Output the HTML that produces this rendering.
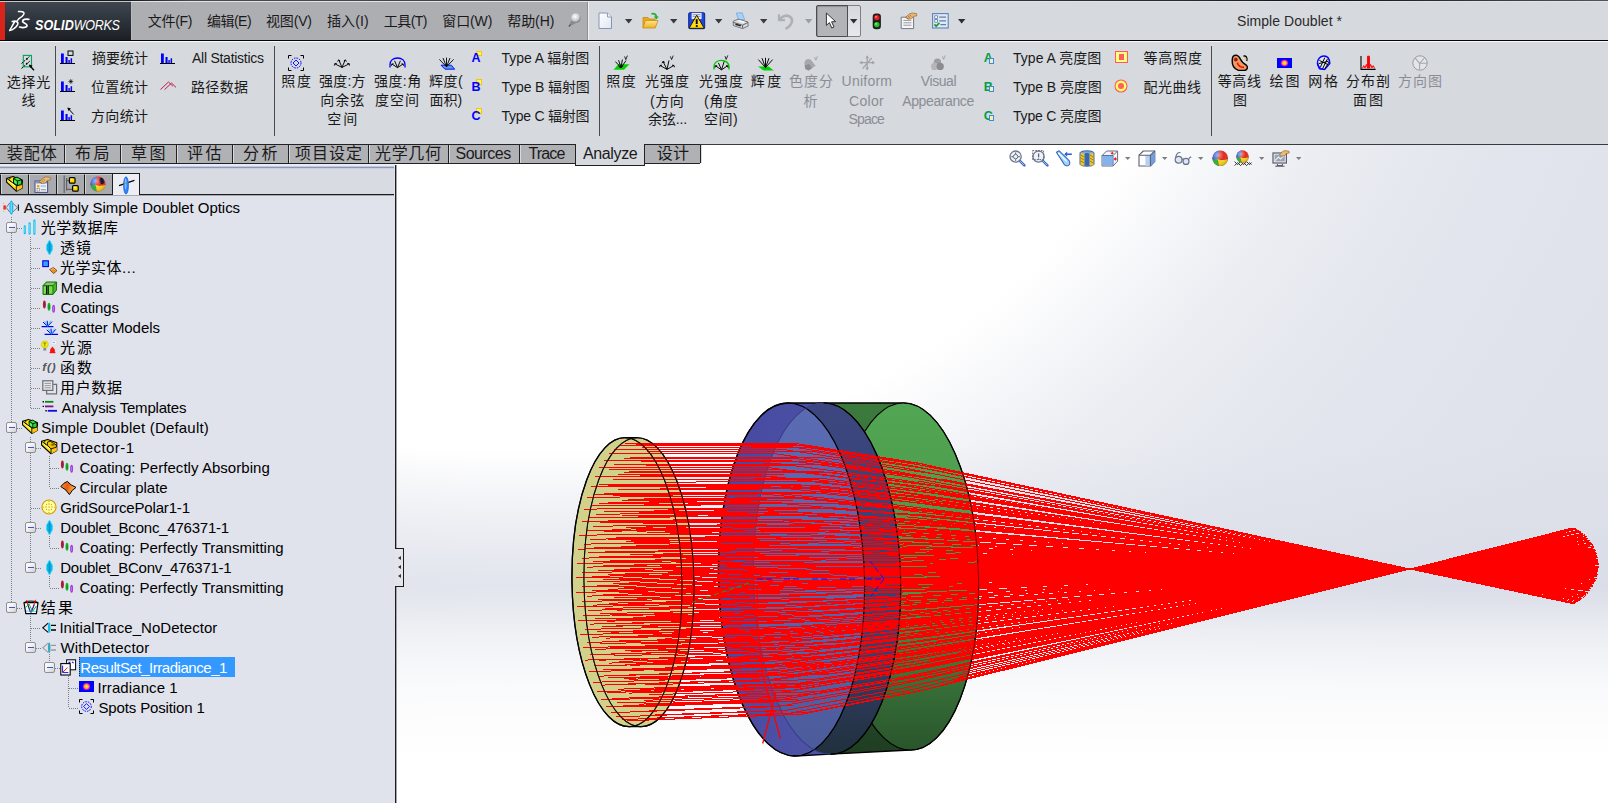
<!DOCTYPE html><html lang="zh"><head><meta charset="utf-8"><title>SOLIDWORKS - Simple Doublet</title><style>
html,body{margin:0;padding:0}
body{width:1608px;height:803px;overflow:hidden;position:relative;background:#fff;font-family:'Liberation Sans','Noto Sans CJK SC',sans-serif;}
.a{position:absolute}
.t{position:absolute;white-space:nowrap;height:24px;line-height:24px}
#logo{left:0;top:2px;width:131px;height:38px;background:linear-gradient(#3f464f 0%,#2f353d 45%,#1c1f25 100%)}
#menu{left:131px;top:2px;width:457px;height:38px;background:#adaeb2}
#qat{left:588px;top:2px;width:1020px;height:38px;background:#d6d9de}
#ribbon{left:0;top:42px;width:1608px;height:102px;background:#d6d9de}
.vs{position:absolute;top:46px;width:1px;height:90px;background:#4a4b50}
#tabs{left:0;top:144px;width:700px;height:20px;background:#b0b1b5;box-sizing:border-box;border-top:1px solid #222;border-bottom:1px solid #222}
.ts{position:absolute;top:145px;width:1px;height:18px;background:#222}
#panel{left:0;top:164px;width:395px;height:639px;background:#e0e3ec}
svg{position:absolute;overflow:visible}
#vp{left:397px;top:145px;width:1211px;height:658px;background:linear-gradient(to bottom,rgba(255,255,255,0) 442px,rgba(255,255,255,.5) 492px,rgba(255,255,255,.82) 540px,#fff 615px),linear-gradient(to bottom,rgba(214,218,229,0) 300px,rgba(214,218,229,.5) 435px,rgba(214,218,229,.5) 465px,rgba(214,218,229,0) 600px),radial-gradient(circle at 140px -408px,rgba(214,218,229,0) 725px,rgba(214,218,229,.2) 790px,rgba(214,218,229,.48) 880px,rgba(214,218,229,.68) 1020px,rgba(214,218,229,.8) 1250px),#fff}
</style></head><body>
<div class="a" id="vp"></div>
<svg class="a" style="left:0;top:0" width="1608" height="803" viewBox="0 0 1608 803">
<defs>
<linearGradient id="gG" x1="0" y1="0" x2="0" y2="1"><stop offset="0" stop-color="#52a653"/><stop offset="0.55" stop-color="#489348"/><stop offset="1" stop-color="#2a552c"/></linearGradient>
<linearGradient id="gGd" x1="0" y1="0" x2="0" y2="1"><stop offset="0" stop-color="#3c7a3c"/><stop offset="0.6" stop-color="#2f5f30"/><stop offset="1" stop-color="#1f3d22"/></linearGradient>
<linearGradient id="gB1" x1="0" y1="0" x2="1" y2="0.25"><stop offset="0" stop-color="#4448a0"/><stop offset="1" stop-color="#5258a8"/></linearGradient>
<linearGradient id="gB2" x1="0" y1="0" x2="0" y2="1"><stop offset="0" stop-color="#5b6bb3"/><stop offset="0.7" stop-color="#5364a8"/><stop offset="1" stop-color="#4a5a9a"/></linearGradient>
<linearGradient id="gB3" x1="0" y1="0" x2="0" y2="1"><stop offset="0" stop-color="#3c4680"/><stop offset="0.7" stop-color="#36406f"/><stop offset="1" stop-color="#20303c"/></linearGradient>
</defs>
<g transform="translate(-8.15,0) skewX(0.8)">
<path d="M627.0,437.7A55.0,144.5 0 0 0 627.0,726.7L639.0,726.7A55.0,144.5 0 0 0 639.0,437.7Z" fill="#d2d18b" stroke="#000" stroke-width="1.3"/>
<path d="M627.0,437.7A55.0,144.5 0 0 1 627.0,726.7" fill="none" stroke="#1a1a10" stroke-width="1"/>
<path d="M639.0,437.7A55.0,144.5 0 0 0 639.0,726.7" fill="none" stroke="#1a1a10" stroke-width="1"/>
</g>
<g transform="translate(-9.6,0) skewX(1.146)">
<clipPath id="cB"><path d="M751.4,578.6A73.6,175.6 0 1 1 898.6,578.6A73.6,175.6 0 1 1 751.4,578.6Z"/></clipPath>
<path d="M825.0,403.0A73.6,175.6 0 0 0 825.0,754.2L905.0,750.0A71.6,173.5 0 0 0 905.0,403.0Z" fill="url(#gGd)" stroke="#000" stroke-width="1.3"/>
<path d="M833.4,576.5A71.6,173.5 0 1 1 976.6,576.5A71.6,173.5 0 1 1 833.4,576.5Z" fill="url(#gG)" stroke="#000" stroke-width="1.2"/>
<path d="M789.5,403.0A73.0,176.5 0 0 0 789.5,756.0L825.0,754.2A73.6,175.6 0 0 0 825.0,403.0Z" fill="url(#gB1)" stroke="#000" stroke-width="1.3"/>
<path d="M751.4,578.6A73.6,175.6 0 1 1 898.6,578.6A73.6,175.6 0 1 1 751.4,578.6Z" fill="url(#gB3)"/>
<path d="M716.5,579.5A73.0,176.5 0 1 1 862.5,579.5A73.0,176.5 0 1 1 716.5,579.5Z" fill="url(#gB2)" clip-path="url(#cB)"/>
<path d="M789.5,403.0A73.0,176.5 0 0 1 789.5,756.0" fill="none" stroke="#000" stroke-width="1.2"/>
<path d="M825.0,403.0A73.6,175.6 0 0 1 825.0,754.2" fill="none" stroke="#000" stroke-width="1.2"/>
<path d="M825.0,403.0A73.6,175.6 0 0 0 825.0,754.2" fill="none" stroke="#3a3f8c" stroke-width="1"/>
<path d="M789.5,403.0A73.0,176.5 0 0 0 789.5,756.0" fill="none" stroke="#000" stroke-width="1.3"/>
</g>
<path d="M629,582.2L772,579.7M940,576.8L1410,569L1595,565.4M634,577.0L777,574.6M944,572.7L1410,569L1593,567.0M630,568.5L798,565.9L916,565.9L1410,569L1595,569.6M625,573.7L768,571.4M936,570.1L1410,569L1596,568.0M624,587.4L792,584.4L910,581.5L1410,569L1596,563.8M628,595.9L796,592.7L914,588.6L1410,569L1595,561.2M633,590.7L776,588.0M944,583.4L1410,569L1593,562.8M639,571.7L807,569.0L924,568.6L1410,569L1591,568.6M635,560.3L779,558.2M946,559.6L1410,569L1592,572.1M630,554.7L799,552.5L916,554.5L1410,569L1594,573.8M625,556.5L768,554.6M936,556.7L1410,569L1596,573.3M621,565.2L763,563.1M933,563.5L1410,569L1597,570.6M619,578.4L786,575.6L905,574.1L1410,569L1598,566.5M619,592.7L787,589.5L906,585.9L1410,569L1598,562.2M623,604.1L765,601.2M934,594.0L1410,569L1596,558.7M628,609.7L771,606.6M939,598.3L1410,569L1595,557.0M633,607.9L801,604.3L919,598.4L1410,569L1593,557.5M637,599.2L806,595.9L923,591.2L1410,569L1591,560.2M639,586.0L808,582.9L925,580.3L1410,569L1591,564.2M644,566.5L812,563.9L929,564.3L1410,569L1588,570.2M641,554.3L809,552.0L926,554.2L1410,569L1589,573.9M636,545.4L780,543.7M947,548.0L1410,569L1591,576.6M631,541.0L799,539.0L917,543.2L1410,569L1592,578.0M626,541.5L769,539.9M937,544.9L1410,569L1594,577.8M621,547.0L763,545.2M933,549.2L1410,569L1596,576.2M617,556.7L759,554.7M929,556.8L1410,569L1597,573.2M614,569.5L756,567.3M927,566.8L1410,569L1598,569.3M613,583.8L780,580.8L900,578.5L1410,569L1599,564.9M614,597.9L757,595.1M927,589.1L1410,569L1598,560.6M617,610.1L785,606.6L904,600.3L1410,569L1597,556.9M622,619.0L789,615.2L908,607.6L1410,569L1596,554.2M627,623.4L795,619.5L913,611.2L1410,569L1594,552.8M632,622.9L801,619.0L918,610.8L1410,569L1592,553.0M637,617.4L781,614.2M947,604.4L1410,569L1590,554.7M641,607.7L785,604.7M951,596.8L1410,569L1589,557.6M644,594.9L788,592.2M953,586.7L1410,569L1588,561.5M645,580.6L814,577.7L930,575.9L1410,569L1588,565.9M649,561.2L818,558.8L933,559.9L1410,569L1585,571.8M646,548.7L790,546.9M955,550.5L1410,569L1586,575.6M642,538.4L811,536.5L927,541.1L1410,569L1587,578.7M637,531.1L806,529.4L923,535.0L1410,569L1589,580.9M632,527.2L775,525.9M943,533.7L1410,569L1591,582.1M626,527.2L794,525.6L913,531.8L1410,569L1592,582.1M621,530.8L789,529.1L908,534.8L1410,569L1594,581.0M616,538.0L759,536.4M929,542.2L1410,569L1596,578.8M612,548.2L779,546.1L899,549.2L1410,569L1597,575.7M610,560.7L777,558.3L897,559.5L1410,569L1598,571.9M608,574.7L775,571.9L896,571.0L1410,569L1599,567.7M608,589.2L775,586.1L895,583.0L1410,569L1599,563.3M609,603.2L752,600.2M923,593.2L1410,569L1598,559.1M612,615.7L779,612.0L899,604.9L1410,569L1597,555.3M616,626.0L759,622.6M929,611.1L1410,569L1596,552.2M621,633.3L788,629.2L907,619.4L1410,569L1594,550.0M626,637.2L794,632.9L912,622.6L1410,569L1593,548.8M632,637.2L775,633.6M942,619.9L1410,569L1591,548.8M637,633.6L805,629.4L922,619.6L1410,569L1589,549.9M642,626.4L785,623.0M951,611.4L1410,569L1587,552.1M646,616.2L815,612.5L931,605.3L1410,569L1586,555.1M648,603.7L817,600.3L933,595.0L1410,569L1585,558.9M650,589.7L819,586.6L934,583.4L1410,569L1584,563.2M650,575.2L819,572.5L935,571.5L1410,569L1584,567.5M653,556.0L797,554.0M962,556.3L1410,569L1581,573.3M651,543.2L820,541.2L935,545.1L1410,569L1582,577.1M647,532.2L816,530.4L932,535.9L1410,569L1583,580.5M643,523.3L812,521.8L928,528.6L1410,569L1585,583.1M638,517.0L806,515.6L923,523.4L1410,569L1587,585.0M633,513.5L801,512.2L918,520.5L1410,569L1588,586.0M627,513.1L795,511.8L913,520.2L1410,569L1590,586.2M622,515.6L789,514.3L908,522.3L1410,569L1592,585.4M617,521.1L784,519.6L903,526.8L1410,569L1594,583.8M612,529.2L754,527.8M925,535.3L1410,569L1595,581.3M608,539.7L775,537.8L896,542.2L1410,569L1597,578.2M605,552.0L772,549.8L893,552.3L1410,569L1598,574.5M603,565.7L770,563.1L891,563.6L1410,569L1598,570.4M603,580.0L769,577.1L890,575.4L1410,569L1599,566.1M603,594.5L745,591.7M917,586.4L1410,569L1598,561.8M605,608.4L771,604.8L892,598.8L1410,569L1598,557.6M607,621.2L774,617.3L895,609.4L1410,569L1597,553.8M611,632.2L753,628.7M924,616.0L1410,569L1596,550.5M615,641.1L782,636.8L902,625.8L1410,569L1594,547.8M620,647.4L763,643.6M932,627.9L1410,569L1593,545.9M625,650.9L768,647.0M937,630.6L1410,569L1591,544.9M631,651.3L774,647.5M942,631.0L1410,569L1589,544.8M636,648.8L805,644.3L922,632.2L1410,569L1587,545.5M641,643.3L785,639.6M951,624.7L1410,569L1585,547.2M646,635.2L790,631.6M955,618.3L1410,569L1584,549.6M650,624.7L819,620.8L934,612.3L1410,569L1583,552.7M653,612.4L822,608.7L937,602.1L1410,569L1582,556.4M655,598.7L799,595.9M963,589.7L1410,569L1581,560.5M655,584.4L825,581.4L940,579.0L1410,569L1581,564.8M655,569.9L824,567.3L939,567.1L1410,569L1581,569.1M658,550.8L828,548.6L942,551.3L1410,569L1577,574.8M656,537.9L825,536.0L940,540.6L1410,569L1578,578.6M652,526.3L822,524.7L937,531.1L1410,569L1579,582.0M648,516.5L792,515.3M957,525.3L1410,569L1581,584.9M644,508.6L813,507.4L929,516.5L1410,569L1582,587.3M639,503.0L782,502.1M949,514.7L1410,569L1584,588.9M633,499.8L802,498.8L919,509.2L1410,569L1586,589.9M628,499.1L796,498.1L914,508.6L1410,569L1588,590.1M622,500.9L765,500.0M934,513.1L1410,569L1589,589.5M617,505.2L760,504.2M929,516.4L1410,569L1591,588.3M612,511.8L754,510.7M925,521.6L1410,569L1593,586.3M608,520.6L750,519.3M921,528.5L1410,569L1594,583.7M604,531.2L771,529.5L892,535.1L1410,569L1596,580.6M601,543.4L768,541.4L889,545.2L1410,569L1597,577.0M599,556.8L741,554.8M913,556.9L1410,569L1597,573.0M598,570.9L739,568.6M912,567.9L1410,569L1598,568.8M597,585.4L764,582.4L886,579.9L1410,569L1598,564.6M598,599.8L765,596.4L886,591.7L1410,569L1598,560.3M600,613.6L766,610.0L888,603.2L1410,569L1597,556.2M602,626.5L769,622.6L890,613.8L1410,569L1596,552.4M606,638.1L772,633.8L893,623.3L1410,569L1595,549.0M610,647.9L777,643.4L897,631.5L1410,569L1594,546.1M614,655.8L781,651.1L901,637.9L1410,569L1592,543.8M619,661.4L787,656.6L906,642.6L1410,569L1590,542.1M625,664.6L768,660.5M936,641.4L1410,569L1589,541.2M630,665.3L798,660.4L916,645.8L1410,569L1587,540.9M636,663.5L804,658.7L921,644.3L1410,569L1585,541.5M641,659.2L810,654.5L926,640.8L1410,569L1583,542.8M646,652.6L815,648.0L931,635.3L1410,569L1582,544.7M650,643.8L819,639.4L935,628.1L1410,569L1580,547.3M654,633.2L823,629.1L938,619.3L1410,569L1579,550.4M657,621.0L801,617.7M965,607.2L1410,569L1578,554.0M659,607.6L829,604.1L943,598.2L1410,569L1577,558.0M660,593.5L805,590.8M968,585.6L1410,569L1577,562.2M661,579.0L805,576.6M968,574.3L1410,569L1577,566.5M660,564.6L804,562.5M967,563.0L1410,569L1577,570.7M663,545.5L808,543.8M970,548.1L1410,569L1573,576.2M661,532.5L805,531.1M968,537.9L1410,569L1574,580.0M658,520.7L802,519.4M965,528.6L1410,569L1575,583.5M654,510.2L798,509.1M962,520.3L1410,569L1576,586.5M649,501.3L793,500.4M958,513.4L1410,569L1578,589.1M645,494.2L788,493.5M954,507.8L1410,569L1579,591.2M639,489.1L808,488.4L925,500.4L1410,569L1581,592.6M634,486.0L777,485.5M944,501.4L1410,569L1583,593.5M629,485.1L796,484.5L915,497.1L1410,569L1585,593.8M623,486.4L791,485.8L909,498.2L1410,569L1586,593.4M618,489.8L760,489.2M930,504.4L1410,569L1588,592.4M613,495.3L755,494.6M925,508.7L1410,569L1590,590.8M608,502.7L750,501.9M921,514.5L1410,569L1591,588.7M604,511.9L770,510.7L891,519.2L1410,569L1593,586.0M600,522.7L742,521.4M914,530.2L1410,569L1594,582.9M597,534.8L763,533.0L885,538.1L1410,569L1595,579.3M594,548.0L761,545.8L883,549.0L1410,569L1596,575.5M593,561.9L759,559.4L881,560.5L1410,569L1596,571.5M592,576.3L758,573.5L881,572.3L1410,569L1597,567.3M592,590.8L734,588.1M907,583.5L1410,569L1597,563.1M593,605.1L735,602.1M908,594.7L1410,569L1596,558.9M595,618.9L736,615.6M910,605.5L1410,569L1596,554.9M597,631.9L739,628.4M912,615.7L1410,569L1595,551.1M600,643.7L767,639.3L888,628.0L1410,569L1594,547.7M604,654.2L746,650.3M918,633.2L1410,569L1593,544.6M609,663.1L751,659.0M922,640.2L1410,569L1591,542.0M613,670.2L781,665.2L900,649.8L1410,569L1590,540.0M619,675.3L786,670.2L905,654.1L1410,569L1588,538.5M624,678.4L767,673.9M936,652.1L1410,569L1586,537.6M629,679.3L798,674.0L915,657.3L1410,569L1584,537.3M635,678.0L778,673.5M945,651.8L1410,569L1582,537.7M640,674.6L809,669.4L926,653.4L1410,569L1581,538.7M645,669.1L814,664.1L930,648.9L1410,569L1579,540.3M650,661.7L819,656.8L935,642.8L1410,569L1577,542.5M654,652.5L824,647.9L939,635.2L1410,569L1576,545.1M658,641.7L802,638.0M966,623.4L1410,569L1575,548.3M661,629.6L831,625.5L945,616.3L1410,569L1574,551.8M664,616.4L808,613.3M971,603.6L1410,569L1573,555.6M665,602.5L835,599.1L949,594.0L1410,569L1573,559.7M666,588.1L836,585.1L949,582.1L1410,569L1572,563.8M666,573.6L836,570.9L949,570.2L1410,569L1572,568.1M665,559.3L809,557.3M972,558.9L1410,569L1573,572.2M668,540.3L813,538.6M975,543.9L1410,569L1569,577.6M666,527.2L835,525.6L949,531.9L1410,569L1569,581.3M663,515.1L832,513.8L946,521.9L1410,569L1570,584.8M659,504.2L828,503.1L943,512.8L1410,569L1572,587.9M655,494.5L824,493.7L939,504.9L1410,569L1573,590.6M650,486.4L819,485.8L935,498.2L1410,569L1574,593.0M645,479.9L814,479.4L930,492.8L1410,569L1576,594.8M640,475.2L784,474.9M950,493.0L1410,569L1578,596.2M635,472.3L803,472.0L920,486.5L1410,569L1579,597.0M629,471.3L772,471.0M940,489.9L1410,569L1581,597.3M624,472.1L766,471.9M935,490.6L1410,569L1583,597.0M618,474.9L761,474.6M931,492.7L1410,569L1585,596.2M613,479.5L755,479.1M926,496.3L1410,569L1586,594.9M608,485.8L750,485.3M921,501.3L1410,569L1588,593.1M604,493.8L770,493.0L891,504.3L1410,569L1589,590.8M599,503.4L766,502.3L887,512.2L1410,569L1591,588.1M596,514.2L762,512.9L884,521.1L1410,569L1592,585.0M593,526.2L759,524.6L881,531.0L1410,569L1593,581.6M590,539.2L756,537.3L879,541.7L1410,569L1594,577.9M588,552.9L754,550.7L877,553.1L1410,569L1594,574.0M587,567.1L753,564.6L876,564.8L1410,569L1595,569.9M587,581.6L728,579.1M903,576.3L1410,569L1595,565.8M587,596.1L728,593.3M903,587.7L1410,569L1595,561.6M588,610.3L729,607.3M904,598.8L1410,569L1594,557.6M590,624.1L731,620.8M905,609.6L1410,569L1594,553.7M592,637.2L759,632.9L881,622.6L1410,569L1593,549.9M595,649.3L762,644.7L884,632.6L1410,569L1592,546.5M599,660.2L766,655.4L887,641.6L1410,569L1591,543.3M603,669.9L770,664.8L891,649.5L1410,569L1590,540.6M608,678.0L775,672.8L895,656.3L1410,569L1588,538.3M613,684.5L780,679.1L900,661.6L1410,569L1587,536.4M618,689.2L760,684.5M930,660.6L1410,569L1585,535.1M623,692.1L791,686.6L910,667.9L1410,569L1583,534.2M629,693.1L797,687.6L915,668.8L1410,569L1581,534.0M634,692.3L803,686.7L920,668.0L1410,569L1580,534.2M640,689.5L808,684.0L925,665.8L1410,569L1578,535.0M645,684.9L814,679.5L930,662.0L1410,569L1576,536.3M650,678.6L794,674.1M959,652.3L1410,569L1574,538.1M654,670.6L824,665.5L939,650.1L1410,569L1573,540.4M659,661.0L803,657.0M966,638.6L1410,569L1572,543.1M662,650.2L832,645.6L946,633.3L1410,569L1570,546.2M665,638.2L835,633.9L949,623.4L1410,569L1569,549.6M668,625.2L838,621.2L951,612.7L1410,569L1569,553.3M670,611.5L840,607.8L953,601.4L1410,569L1568,557.3M671,597.3L841,594.0L954,589.6L1410,569L1568,561.3M671,582.8L841,579.8L954,577.7L1410,569L1568,565.5M671,568.3L816,566.1M977,565.9L1410,569L1568,569.6M670,554.1L815,552.1M976,554.7L1410,569L1568,573.7M673,535.0L818,533.5M979,539.8L1410,569L1564,578.9M671,522.0L841,520.5L954,527.5L1410,569L1564,582.5M668,509.7L838,508.5L951,517.4L1410,569L1565,585.9M664,498.4L809,497.6M971,511.1L1410,569L1566,589.1M660,488.2L830,487.5L944,499.7L1410,569L1568,591.9M656,479.3L825,478.8L940,492.3L1410,569L1569,594.4M651,471.8L820,471.5L936,486.1L1410,569L1571,596.5M646,465.8L790,465.7M955,485.6L1410,569L1572,598.2M641,461.4L809,461.3L926,477.5L1410,569L1574,599.4M635,458.6L779,458.6M946,479.9L1410,569L1576,600.2M630,457.4L773,457.5M941,479.0L1410,569L1577,600.5M624,458.0L792,458.0L911,474.7L1410,569L1579,600.4M619,460.2L786,460.2L906,476.6L1410,569L1581,599.8M614,464.1L781,464.0L901,479.8L1410,569L1582,598.7M609,469.6L776,469.3L896,484.3L1410,569L1584,597.1M604,476.6L770,476.2L891,490.1L1410,569L1586,595.2M599,485.0L766,484.4L887,497.0L1410,569L1587,592.8M595,494.8L761,493.9L883,505.1L1410,569L1588,590.1M592,505.7L733,504.8M907,516.9L1410,569L1589,587.0M588,517.7L730,516.5M904,526.2L1410,569L1590,583.7M586,530.5L727,529.1M902,536.3L1410,569L1591,580.1M584,544.1L725,542.3M900,546.9L1410,569L1592,576.3M582,558.1L748,555.8L872,557.3L1410,569L1592,572.4M582,572.5L723,570.2M898,569.2L1410,569L1593,568.4M582,587.0L747,584.0L871,581.2L1410,569L1593,564.3M582,601.4L723,598.6M898,591.9L1410,569L1592,560.3M583,615.6L749,611.9L872,604.8L1410,569L1592,556.3M585,629.4L726,625.9M901,613.7L1410,569L1591,552.5M587,642.4L753,638.1L876,626.9L1410,569L1591,548.9M590,654.7L756,650.1L879,637.1L1410,569L1590,545.4M594,666.0L760,661.1L882,646.4L1410,569L1589,542.3M598,676.2L764,671.0L886,654.8L1410,569L1587,539.4M602,685.1L769,679.7L890,662.1L1410,569L1586,536.9M607,692.6L774,687.0L894,668.3L1410,569L1585,534.8M612,698.6L779,692.9L899,673.3L1410,569L1583,533.2M617,703.0L785,697.2L904,676.9L1410,569L1581,531.9M623,705.8L765,700.8M934,673.7L1410,569L1580,531.1M628,707.0L796,701.1L914,680.2L1410,569L1578,530.8M634,706.4L777,701.4M944,674.1L1410,569L1576,531.0M639,704.2L782,699.2M949,672.4L1410,569L1574,531.6M644,700.3L813,694.6L929,674.7L1410,569L1573,532.7M649,694.8L793,690.0M958,665.0L1410,569L1571,534.2M654,687.8L824,682.4L939,664.4L1410,569L1570,536.2M659,679.4L828,674.1L943,657.4L1410,569L1568,538.5M663,669.6L833,664.6L947,649.4L1410,569L1567,541.3M666,658.7L811,654.6M973,636.7L1410,569L1566,544.3M670,646.7L840,642.3L953,630.5L1410,569L1565,547.7M672,633.9L842,629.7L955,619.9L1410,569L1564,551.2M674,620.3L844,616.5L957,608.7L1410,569L1563,555.0M676,606.3L821,603.3M981,595.7L1410,569L1563,558.9M676,591.9L847,588.8L959,585.2L1410,569L1563,563.0M676,577.4L821,575.0M982,573.0L1410,569L1563,567.0M676,563.0L821,560.9M982,561.7L1410,569L1563,571.1M675,548.8L845,546.6L958,549.6L1410,569L1563,575.0M678,529.8L848,528.1L961,534.0L1410,569L1558,580.0M675,516.7L846,515.3L958,523.2L1410,569L1559,583.6M673,504.3L843,503.2L956,512.9L1410,569L1560,587.0M669,492.7L839,491.9L953,503.4L1410,569L1561,590.1M665,482.1L835,481.6L949,494.6L1410,569L1562,593.0M661,472.6L831,472.3L945,486.8L1410,569L1564,595.6M657,464.4L826,464.2L941,480.0L1410,569L1565,597.9M652,457.4L821,457.4L936,474.2L1410,569L1566,599.8M647,451.7L816,451.9L932,469.6L1410,569L1568,601.3M642,447.5L810,447.8L927,466.1L1410,569L1570,602.5M636,444.8L805,445.2L922,463.9L1410,569L1571,603.2M631,443.6L799,444.0L917,462.9L1410,569L1573,603.5M625,443.9L793,444.3L911,463.1L1410,569L1575,603.4M620,445.7L787,446.1L906,464.6L1410,569L1576,602.9M614,449.0L782,449.3L901,467.3L1410,569L1578,602.0M609,453.8L776,453.9L896,471.3L1410,569L1580,600.7M604,460.0L746,460.0M918,481.0L1410,569L1581,599.1M599,467.5L766,467.3L887,482.6L1410,569L1583,597.0M595,476.3L761,475.9L883,489.8L1410,569L1584,594.6M591,486.2L757,485.6L880,498.0L1410,569L1585,591.9M587,497.2L729,496.4M903,510.2L1410,569L1586,588.9M584,509.1L725,508.1M900,519.5L1410,569L1587,585.7M582,521.8L747,520.4L871,527.4L1410,569L1588,582.2M579,535.2L720,533.7M896,540.0L1410,569L1589,578.6M578,549.1L719,547.3M895,550.9L1410,569L1589,574.8M577,563.4L718,561.3M894,562.0L1410,569L1590,570.9M576,577.8L742,575.0L866,573.6L1410,569L1590,566.9M576,592.4L742,589.2L866,585.6L1410,569L1590,563.0M577,606.8L742,603.2L867,597.5L1410,569L1589,559.1M578,620.9L719,617.6M895,607.1L1410,569L1589,555.2M580,634.6L746,630.4L869,620.5L1410,569L1589,551.5M583,647.7L748,643.2L872,631.3L1410,569L1588,547.9M585,660.1L727,656.1M901,637.8L1410,569L1587,544.5M589,671.7L755,666.6L877,651.1L1410,569L1586,541.4M593,682.3L759,677.0L881,659.8L1410,569L1585,538.5M597,691.8L738,687.1M911,662.6L1410,569L1583,535.9M601,700.0L768,694.3L889,674.5L1410,569L1582,533.6M606,707.0L773,701.1L894,680.2L1410,569L1581,531.7M611,712.7L778,706.6L898,684.9L1410,569L1579,530.2M616,716.9L784,710.7L903,688.3L1410,569L1577,529.1M622,719.6L789,713.4L908,690.6L1410,569L1576,528.3M627,720.8L770,715.5M939,685.4L1410,569L1574,528.0M633,720.5L801,714.3L919,691.3L1410,569L1572,528.1M638,718.7L807,712.5L924,689.8L1410,569L1571,528.6M644,715.4L787,710.2M953,681.1L1410,569L1569,529.5M649,710.6L793,705.5M958,677.4L1410,569L1567,530.8M654,704.4L798,699.4M962,672.5L1410,569L1566,532.4M659,696.9L828,691.2L943,671.9L1410,569L1564,534.5M663,688.1L808,683.5M970,659.8L1410,569L1563,536.9M667,678.2L837,673.0L950,656.4L1410,569L1562,539.6M671,667.2L841,662.2L954,647.3L1410,569L1561,542.6M674,655.3L819,651.3M980,634.0L1410,569L1560,545.8M676,642.6L822,638.8M982,624.1L1410,569L1559,549.3M679,629.2L849,625.1L961,616.0L1410,569L1558,553.0M680,615.3L851,611.6L963,604.5L1410,569L1558,556.7M681,601.0L826,598.1M986,591.5L1410,569L1557,560.6M682,586.6L852,583.5L964,580.8L1410,569L1557,564.6M682,572.0L852,569.4L964,568.8L1410,569L1557,568.5M681,557.6L852,555.3L963,557.0L1410,569L1558,572.4M680,543.5L825,541.8M985,546.5L1410,569L1558,576.3" fill="none" stroke="#ff0000" stroke-width="1" shape-rendering="crispEdges"/>
<g transform="translate(-9.6,0) skewX(1.146)">
<path d="M789.5,403.0A73.0,176.5 0 0 1 789.5,756.0" fill="none" stroke="#000" stroke-width="1" opacity="0.45"/>
<path d="M825.0,403.0A73.6,175.6 0 0 1 825.0,754.2" fill="none" stroke="#000" stroke-width="1" opacity="0.45"/>
<path d="M905.0,403.0A71.6,173.5 0 0 1 905.0,750.0" fill="none" stroke="#000" stroke-width="1" opacity="0.5"/>
</g>
<g transform="translate(-8.15,0) skewX(0.8)">
<path d="M627.0,437.7A55.0,144.5 0 0 1 627.0,726.7" fill="none" stroke="#000" stroke-width="1" opacity="0.8"/>
<path d="M639.0,437.7A55.0,144.5 0 0 1 639.0,726.7" fill="none" stroke="#000" stroke-width="1" opacity="0.8"/>
<path d="M639.0,437.7A55.0,144.5 0 0 0 639.0,726.7" fill="none" stroke="#000" stroke-width="1" opacity="0.75"/>
<path d="M627.0,437.7A55.0,144.5 0 0 0 627.0,726.7" fill="none" stroke="#000" stroke-width="1.2" opacity="0.9"/>
</g>
<path d="M757,579H772M784,579H800M812,579H828M840,579H856M866,579H884M884,579L870,561M884,579L871,596" stroke="#1010ff" stroke-width="1" fill="none" stroke-dasharray="6 3"/>
<path d="M749,583L693,602" stroke="#18a018" stroke-width="1" fill="none" stroke-dasharray="5 3"/>
<path d="M762.7,743.5L775.7,693.5M757,585C757,640 762,676 768.6,696L780.4,738.5" stroke="#ff0000" stroke-width="1.3" fill="none"/>
</svg>
<div class="a" id="logo"></div><div class="a" style="left:0;top:2px;width:5px;height:38px;background:#d8241b"></div>
<div class="a" id="menu"></div><div class="a" id="qat"></div>
<div class="a" style="left:131px;top:2px;width:1px;height:38px;background:#b9babe"></div>
<div class="a" style="left:587px;top:2px;width:1px;height:38px;background:#8e8f94"></div>
<div class="a" style="left:588px;top:2px;width:1px;height:38px;background:#f2f3f6"></div>
<div class="a" style="left:0;top:0;width:1608px;height:1px;background:linear-gradient(to right,#0c0c0c 0,#1a1a1a 8%,#4a4a4a 12%,#3a3a3a 50%,#2a2a2a 74%,#111 82%,#555 100%)"></div>
<div class="a" style="left:0;top:1px;width:1608px;height:1px;background:#e1e4e9"></div>
<div class="a" style="left:0;top:1px;width:131px;height:1px;background:#c3c6ca"></div>
<div class="a" style="left:0;top:40px;width:1608px;height:1px;background:#050505"></div>
<div class="a" style="left:0;top:41px;width:1608px;height:1px;background:#f7f8fa"></div>
<div class="a" id="ribbon"></div>
<div class="vs" style="left:55px"></div>
<div class="vs" style="left:274px"></div>
<div class="vs" style="left:599px"></div>
<div class="vs" style="left:1211px"></div>
<div class="a" style="left:700px;top:144px;width:908px;height:1px;background:#3a3a3d"></div>
<div class="a" id="tabs"></div>
<div class="ts" style="left:64px"></div><div class="ts" style="left:65px;background:#d9dade"></div>
<div class="ts" style="left:120px"></div><div class="ts" style="left:121px;background:#d9dade"></div>
<div class="ts" style="left:176px"></div><div class="ts" style="left:177px;background:#d9dade"></div>
<div class="ts" style="left:232px"></div><div class="ts" style="left:233px;background:#d9dade"></div>
<div class="ts" style="left:288px"></div><div class="ts" style="left:289px;background:#d9dade"></div>
<div class="ts" style="left:368px"></div><div class="ts" style="left:369px;background:#d9dade"></div>
<div class="ts" style="left:448px"></div><div class="ts" style="left:449px;background:#d9dade"></div>
<div class="ts" style="left:519px"></div><div class="ts" style="left:520px;background:#d9dade"></div>
<div class="ts" style="left:700px"></div><div class="ts" style="left:701px;background:#d9dade"></div>
<div class="a" style="left:575px;top:144px;width:70px;height:22px;box-sizing:border-box;background:#d6d9de;border:1px solid #222;border-top:none"></div>
<div class="a" id="panel"></div>
<div class="a" style="left:0;top:164px;width:395px;height:3px;background:#e8ebf3"></div>
<div class="a" style="left:0;top:166px;width:394px;height:3px;background:linear-gradient(#c3c8dc 0 1px,#8d97b8 1px 2px,#c9cee0 2px 3px)"></div>
<div class="a" style="left:0;top:169px;width:394px;height:25px;background:#d8dbe1"></div>
<div class="a" style="left:0;top:194px;width:394px;height:1px;background:#1c1c1e"></div><div class="a" style="left:0;top:195px;width:394px;height:1px;background:#a9abb3"></div>
<div class="a" style="left:395px;top:165px;width:1px;height:638px;background:#1c1c1e"></div>
<div class="a" style="left:396px;top:165px;width:1px;height:638px;background:#a4a5ab"></div>
<div class="a" style="left:1px;top:174px;width:26px;height:20px;background:#a9abb0;border:1px solid #77797f;border-bottom:none;box-sizing:border-box"></div>
<div class="a" style="left:29px;top:174px;width:26px;height:20px;background:#a9abb0;border:1px solid #77797f;border-bottom:none;box-sizing:border-box"></div>
<div class="a" style="left:57px;top:174px;width:26px;height:20px;background:#a9abb0;border:1px solid #77797f;border-bottom:none;box-sizing:border-box"></div>
<div class="a" style="left:85px;top:174px;width:26px;height:20px;background:#a9abb0;border:1px solid #77797f;border-bottom:none;box-sizing:border-box"></div>
<div class="a" style="left:113px;top:173px;width:27px;height:22px;background:#e6e8ee;border:1px solid #f8f8fa;border-bottom:none;box-sizing:border-box"></div>
<div class="a" style="left:395px;top:548px;width:9px;height:39px;box-sizing:border-box;background:#e4e5ea;border:1px solid #1c1c1e;border-left:none"></div>
<div class="a" style="left:398px;top:555.5px;width:0;height:0;border-top:2.5px solid transparent;border-bottom:2.5px solid transparent;border-right:3px solid #333"></div>
<div class="a" style="left:398px;top:564.5px;width:0;height:0;border-top:2.5px solid transparent;border-bottom:2.5px solid transparent;border-right:3px solid #333"></div>
<div class="a" style="left:398px;top:573.5px;width:0;height:0;border-top:2.5px solid transparent;border-bottom:2.5px solid transparent;border-right:3px solid #333"></div>
<div class="a" style="left:79px;top:657px;width:156px;height:20px;background:#3399ff"></div>
<div class="a" style="left:11px;top:217px;width:1px;height:385px;background:repeating-linear-gradient(to bottom,#7d7e84 0 1px,transparent 1px 2px)"></div>
<div class="a" style="left:30px;top:237px;width:1px;height:171px;background:repeating-linear-gradient(to bottom,#7d7e84 0 1px,transparent 1px 2px)"></div>
<div class="a" style="left:30px;top:437px;width:1px;height:125px;background:repeating-linear-gradient(to bottom,#7d7e84 0 1px,transparent 1px 2px)"></div>
<div class="a" style="left:30px;top:616px;width:1px;height:26px;background:repeating-linear-gradient(to bottom,#7d7e84 0 1px,transparent 1px 2px)"></div>
<div class="a" style="left:49px;top:456px;width:1px;height:32px;background:repeating-linear-gradient(to bottom,#7d7e84 0 1px,transparent 1px 2px)"></div>
<div class="a" style="left:49px;top:536px;width:1px;height:12px;background:repeating-linear-gradient(to bottom,#7d7e84 0 1px,transparent 1px 2px)"></div>
<div class="a" style="left:49px;top:576px;width:1px;height:12px;background:repeating-linear-gradient(to bottom,#7d7e84 0 1px,transparent 1px 2px)"></div>
<div class="a" style="left:49px;top:654px;width:1px;height:8px;background:repeating-linear-gradient(to bottom,#7d7e84 0 1px,transparent 1px 2px)"></div>
<div class="a" style="left:68px;top:676px;width:1px;height:32px;background:repeating-linear-gradient(to bottom,#7d7e84 0 1px,transparent 1px 2px)"></div>
<div class="a" style="left:17px;top:228px;width:5px;height:1px;background:repeating-linear-gradient(to right,#7d7e84 0 1px,transparent 1px 2px)"></div>
<div class="a" style="left:17px;top:428px;width:5px;height:1px;background:repeating-linear-gradient(to right,#7d7e84 0 1px,transparent 1px 2px)"></div>
<div class="a" style="left:17px;top:608px;width:5px;height:1px;background:repeating-linear-gradient(to right,#7d7e84 0 1px,transparent 1px 2px)"></div>
<div class="a" style="left:31px;top:248px;width:10px;height:1px;background:repeating-linear-gradient(to right,#7d7e84 0 1px,transparent 1px 2px)"></div>
<div class="a" style="left:31px;top:268px;width:10px;height:1px;background:repeating-linear-gradient(to right,#7d7e84 0 1px,transparent 1px 2px)"></div>
<div class="a" style="left:31px;top:288px;width:10px;height:1px;background:repeating-linear-gradient(to right,#7d7e84 0 1px,transparent 1px 2px)"></div>
<div class="a" style="left:31px;top:308px;width:10px;height:1px;background:repeating-linear-gradient(to right,#7d7e84 0 1px,transparent 1px 2px)"></div>
<div class="a" style="left:31px;top:328px;width:10px;height:1px;background:repeating-linear-gradient(to right,#7d7e84 0 1px,transparent 1px 2px)"></div>
<div class="a" style="left:31px;top:348px;width:10px;height:1px;background:repeating-linear-gradient(to right,#7d7e84 0 1px,transparent 1px 2px)"></div>
<div class="a" style="left:31px;top:368px;width:10px;height:1px;background:repeating-linear-gradient(to right,#7d7e84 0 1px,transparent 1px 2px)"></div>
<div class="a" style="left:31px;top:388px;width:10px;height:1px;background:repeating-linear-gradient(to right,#7d7e84 0 1px,transparent 1px 2px)"></div>
<div class="a" style="left:31px;top:408px;width:10px;height:1px;background:repeating-linear-gradient(to right,#7d7e84 0 1px,transparent 1px 2px)"></div>
<div class="a" style="left:36px;top:448px;width:5px;height:1px;background:repeating-linear-gradient(to right,#7d7e84 0 1px,transparent 1px 2px)"></div>
<div class="a" style="left:36px;top:528px;width:5px;height:1px;background:repeating-linear-gradient(to right,#7d7e84 0 1px,transparent 1px 2px)"></div>
<div class="a" style="left:36px;top:568px;width:5px;height:1px;background:repeating-linear-gradient(to right,#7d7e84 0 1px,transparent 1px 2px)"></div>
<div class="a" style="left:36px;top:648px;width:5px;height:1px;background:repeating-linear-gradient(to right,#7d7e84 0 1px,transparent 1px 2px)"></div>
<div class="a" style="left:31px;top:508px;width:10px;height:1px;background:repeating-linear-gradient(to right,#7d7e84 0 1px,transparent 1px 2px)"></div>
<div class="a" style="left:31px;top:628px;width:10px;height:1px;background:repeating-linear-gradient(to right,#7d7e84 0 1px,transparent 1px 2px)"></div>
<div class="a" style="left:50px;top:468px;width:10px;height:1px;background:repeating-linear-gradient(to right,#7d7e84 0 1px,transparent 1px 2px)"></div>
<div class="a" style="left:50px;top:488px;width:10px;height:1px;background:repeating-linear-gradient(to right,#7d7e84 0 1px,transparent 1px 2px)"></div>
<div class="a" style="left:50px;top:548px;width:10px;height:1px;background:repeating-linear-gradient(to right,#7d7e84 0 1px,transparent 1px 2px)"></div>
<div class="a" style="left:50px;top:588px;width:10px;height:1px;background:repeating-linear-gradient(to right,#7d7e84 0 1px,transparent 1px 2px)"></div>
<div class="a" style="left:55px;top:668px;width:5px;height:1px;background:repeating-linear-gradient(to right,#7d7e84 0 1px,transparent 1px 2px)"></div>
<div class="a" style="left:69px;top:688px;width:10px;height:1px;background:repeating-linear-gradient(to right,#7d7e84 0 1px,transparent 1px 2px)"></div>
<div class="a" style="left:69px;top:708px;width:10px;height:1px;background:repeating-linear-gradient(to right,#7d7e84 0 1px,transparent 1px 2px)"></div>
<div class="a" style="left:6px;top:222px;width:11px;height:11px;box-sizing:border-box;border:1px solid #8e8f94;border-radius:2px;background:linear-gradient(135deg,#fff 0%,#f2f2f4 45%,#cfd0d4 100%)"></div><div class="a" style="left:8.5px;top:227px;width:6px;height:1px;background:#3d55c4"></div>
<div class="a" style="left:6px;top:422px;width:11px;height:11px;box-sizing:border-box;border:1px solid #8e8f94;border-radius:2px;background:linear-gradient(135deg,#fff 0%,#f2f2f4 45%,#cfd0d4 100%)"></div><div class="a" style="left:8.5px;top:427px;width:6px;height:1px;background:#3d55c4"></div>
<div class="a" style="left:6px;top:602px;width:11px;height:11px;box-sizing:border-box;border:1px solid #8e8f94;border-radius:2px;background:linear-gradient(135deg,#fff 0%,#f2f2f4 45%,#cfd0d4 100%)"></div><div class="a" style="left:8.5px;top:607px;width:6px;height:1px;background:#3d55c4"></div>
<div class="a" style="left:25px;top:442px;width:11px;height:11px;box-sizing:border-box;border:1px solid #8e8f94;border-radius:2px;background:linear-gradient(135deg,#fff 0%,#f2f2f4 45%,#cfd0d4 100%)"></div><div class="a" style="left:27.5px;top:447px;width:6px;height:1px;background:#3d55c4"></div>
<div class="a" style="left:25px;top:522px;width:11px;height:11px;box-sizing:border-box;border:1px solid #8e8f94;border-radius:2px;background:linear-gradient(135deg,#fff 0%,#f2f2f4 45%,#cfd0d4 100%)"></div><div class="a" style="left:27.5px;top:527px;width:6px;height:1px;background:#3d55c4"></div>
<div class="a" style="left:25px;top:562px;width:11px;height:11px;box-sizing:border-box;border:1px solid #8e8f94;border-radius:2px;background:linear-gradient(135deg,#fff 0%,#f2f2f4 45%,#cfd0d4 100%)"></div><div class="a" style="left:27.5px;top:567px;width:6px;height:1px;background:#3d55c4"></div>
<div class="a" style="left:25px;top:642px;width:11px;height:11px;box-sizing:border-box;border:1px solid #8e8f94;border-radius:2px;background:linear-gradient(135deg,#fff 0%,#f2f2f4 45%,#cfd0d4 100%)"></div><div class="a" style="left:27.5px;top:647px;width:6px;height:1px;background:#3d55c4"></div>
<div class="a" style="left:44px;top:662px;width:11px;height:11px;box-sizing:border-box;border:1px solid #8e8f94;border-radius:2px;background:linear-gradient(135deg,#fff 0%,#f2f2f4 45%,#cfd0d4 100%)"></div><div class="a" style="left:46.5px;top:667px;width:6px;height:1px;background:#3d55c4"></div>
<div class="a" style="left:79px;top:657px;width:1px;height:20px;background:repeating-linear-gradient(to bottom,#222 0 1px,transparent 1px 2px)"></div>
<svg style="left:3px;top:199px" width="17" height="17" viewBox="0 0 17 17" ><path d="M1.6,6.4V10.6" stroke="#ff2020" stroke-width="2.4"/><path d="M0.4,4.2L1.2,5M0.4,12.8L1.2,12" stroke="#f0a000" stroke-width="0.8"/><path d="M7,3.6L3.2,8.6L7,13.4M9.8,4.2L14.4,8.6L9.8,13" fill="none" stroke="#66676e" stroke-width="0.9"/><path d="M15.4,5.6V11.8" stroke="#222" stroke-width="1.2"/><ellipse cx="8.4" cy="8.6" rx="1.6" ry="6.8" fill="#18c8ff" stroke="#00a0e8" stroke-width="0.6"/><path d="M8.2,3.4V13.6" stroke="#b8f0ff" stroke-width="0.7"/></svg>
<svg style="left:23px;top:219px" width="14" height="16" viewBox="0 0 14 16" ><path d="M1.8,7.4V14.2M6.6,4.4V14.6M11.4,1.6V14.8" stroke="#18c0f0" stroke-width="2.2" stroke-linecap="round"/><path d="M1.8,8V13.6M6.6,5V14M11.4,2.2V14.2" stroke="#7fe4ff" stroke-width="0.7"/></svg>
<svg style="left:44.5px;top:240.1px" width="9" height="15" viewBox="0 0 9 15" ><path d="M4.5,0.6C5.4,0.6 5.8,1.6 5.8,2.6C5.8,3.4 7.4,4.2 7.4,5.6V9.4C7.4,10.8 5.8,11.6 5.8,12.4C5.8,13.4 5.4,14.4 4.5,14.4C3.6,14.4 3.2,13.4 3.2,12.4C3.2,11.6 1.6,10.8 1.6,9.4V5.6C1.6,4.2 3.2,3.4 3.2,2.6C3.2,1.6 3.6,0.6 4.5,0.6Z" fill="#08b4e8" stroke="#20e0ff" stroke-width="0.8"/><path d="M4.5,2.6V12.4" stroke="#0890c4" stroke-width="1.4"/></svg>
<svg style="left:44.5px;top:520.1px" width="9" height="15" viewBox="0 0 9 15" ><path d="M4.5,0.6C5.4,0.6 5.8,1.6 5.8,2.6C5.8,3.4 7.4,4.2 7.4,5.6V9.4C7.4,10.8 5.8,11.6 5.8,12.4C5.8,13.4 5.4,14.4 4.5,14.4C3.6,14.4 3.2,13.4 3.2,12.4C3.2,11.6 1.6,10.8 1.6,9.4V5.6C1.6,4.2 3.2,3.4 3.2,2.6C3.2,1.6 3.6,0.6 4.5,0.6Z" fill="#08b4e8" stroke="#20e0ff" stroke-width="0.8"/><path d="M4.5,2.6V12.4" stroke="#0890c4" stroke-width="1.4"/></svg>
<svg style="left:44.5px;top:560.1px" width="9" height="15" viewBox="0 0 9 15" ><path d="M4.5,0.6C5.4,0.6 5.8,1.6 5.8,2.6C5.8,3.4 7.4,4.2 7.4,5.6V9.4C7.4,10.8 5.8,11.6 5.8,12.4C5.8,13.4 5.4,14.4 4.5,14.4C3.6,14.4 3.2,13.4 3.2,12.4C3.2,11.6 1.6,10.8 1.6,9.4V5.6C1.6,4.2 3.2,3.4 3.2,2.6C3.2,1.6 3.6,0.6 4.5,0.6Z" fill="#08b4e8" stroke="#20e0ff" stroke-width="0.8"/><path d="M4.5,2.6V12.4" stroke="#0890c4" stroke-width="1.4"/></svg>
<svg style="left:41.5px;top:259.5px" width="16" height="16" viewBox="0 0 16 16" ><rect x="0.8" y="0.8" width="5.6" height="5.8" fill="#3aa0ff" stroke="#0000e0" stroke-width="1.1"/><path d="M7.6,9.6L11.4,7.6L15,10.6L11.6,13.6Z" fill="#f08a18" stroke="#6a3a08" stroke-width="0.8"/><path d="M8.6,9.8L11.4,8.6L13.6,10.4" stroke="#ffd080" stroke-width="0.8" fill="none"/></svg>
<svg style="left:41.5px;top:280px" width="16" height="16" viewBox="0 0 16 16" ><path d="M1,5.6L4.4,2H14.6L14.4,10.2L11,14.4H1Z" fill="#46b82a" stroke="#1d6a10" stroke-width="1"/><path d="M1,5.6H11V14.4M11,5.6L14.6,2" fill="none" stroke="#1d6a10" stroke-width="0.9"/><path d="M4.6,5.8V14.2M6.2,5.8V14.2" stroke="#000" stroke-width="1"/><path d="M5.4,5.6L8.6,2.2" stroke="#7a7a30" stroke-width="1"/><path d="M1.8,6.4H4V13.6H1.8ZM7,6.4H10.2V13.6H7Z" fill="#7ddc4e"/><path d="M2.6,5L4.8,2.8H13L10.8,5Z" fill="#8ac86a"/></svg>
<svg style="left:42px;top:300.1px" width="14" height="14" viewBox="0 0 14 14" ><ellipse cx="2.4" cy="4.6" rx="1.5" ry="4" fill="#c81818"/><path d="M2.4,2.6V6.6" stroke="#2a3ad0" stroke-width="0.9"/><ellipse cx="7" cy="6.8" rx="1.5" ry="4" fill="#18b828"/><path d="M7,4.8V8.8" stroke="#0a7a18" stroke-width="0.9"/><ellipse cx="11.6" cy="8.8" rx="1.5" ry="4" fill="#c828e0"/><path d="M11.6,6.8V10.8" stroke="#30c8e8" stroke-width="0.9"/></svg>
<svg style="left:60.2px;top:460.1px" width="14" height="14" viewBox="0 0 14 14" ><ellipse cx="2.4" cy="4.6" rx="1.5" ry="4" fill="#c81818"/><path d="M2.4,2.6V6.6" stroke="#2a3ad0" stroke-width="0.9"/><ellipse cx="7" cy="6.8" rx="1.5" ry="4" fill="#18b828"/><path d="M7,4.8V8.8" stroke="#0a7a18" stroke-width="0.9"/><ellipse cx="11.6" cy="8.8" rx="1.5" ry="4" fill="#c828e0"/><path d="M11.6,6.8V10.8" stroke="#30c8e8" stroke-width="0.9"/></svg>
<svg style="left:60.2px;top:540.1px" width="14" height="14" viewBox="0 0 14 14" ><ellipse cx="2.4" cy="4.6" rx="1.5" ry="4" fill="#c81818"/><path d="M2.4,2.6V6.6" stroke="#2a3ad0" stroke-width="0.9"/><ellipse cx="7" cy="6.8" rx="1.5" ry="4" fill="#18b828"/><path d="M7,4.8V8.8" stroke="#0a7a18" stroke-width="0.9"/><ellipse cx="11.6" cy="8.8" rx="1.5" ry="4" fill="#c828e0"/><path d="M11.6,6.8V10.8" stroke="#30c8e8" stroke-width="0.9"/></svg>
<svg style="left:60.2px;top:580.1px" width="14" height="14" viewBox="0 0 14 14" ><ellipse cx="2.4" cy="4.6" rx="1.5" ry="4" fill="#c81818"/><path d="M2.4,2.6V6.6" stroke="#2a3ad0" stroke-width="0.9"/><ellipse cx="7" cy="6.8" rx="1.5" ry="4" fill="#18b828"/><path d="M7,4.8V8.8" stroke="#0a7a18" stroke-width="0.9"/><ellipse cx="11.6" cy="8.8" rx="1.5" ry="4" fill="#c828e0"/><path d="M11.6,6.8V10.8" stroke="#30c8e8" stroke-width="0.9"/></svg>
<svg style="left:40.5px;top:319.5px" width="18" height="16" viewBox="0 0 18 16" ><path d="M0.6,6.6H12.4M3.6,14.4H17" stroke="#0000e8" stroke-width="1.1"/><path d="M6.6,6.4L2,2M6.6,6.4L6.2,0.8M6.6,6.4L11,1.6" stroke="#0000e8" stroke-width="1"/><path d="M6.6,6.4L9.6,0.6M6.6,6.4L3.6,1" stroke="#20c8f0" stroke-width="0.8"/><path d="M10.4,14.2L5.8,9.8M10.4,14.2L10,8.6M10.4,14.2L14.8,9.4" stroke="#0000e8" stroke-width="1"/><path d="M10.4,14.2L13.4,8.4M10.4,14.2L7.4,8.8" stroke="#20c8f0" stroke-width="0.8"/></svg>
<svg style="left:41px;top:339.5px" width="16" height="15" viewBox="0 0 16 15" ><circle cx="3.8" cy="4.4" r="3.5" fill="#f4ec18" stroke="#c8b800" stroke-width="0.6"/><path d="M2.4,3H5.2M3.8,3V6.4" stroke="#7a6a00" stroke-width="0.8"/><rect x="2.4" y="8" width="2.8" height="2.6" fill="#8a8b90"/><rect x="10.4" y="0.6" width="4.6" height="4" fill="#fff" stroke="#d8dce8" stroke-width="0.6"/><rect x="11.4" y="1.8" width="2.6" height="1.4" fill="#8ab8f0"/><path d="M11.4,6.6L13.8,9.4L14,12.4H9L9.2,9.4Z" fill="#ff1010"/><path d="M8.6,12.6H14.4" stroke="#ff1010" stroke-width="1.2"/></svg>
<div class="t" style="left:42.2px;top:355.3px;font-size:11.8px;font-weight:bold;font-style:italic;color:#55565b;letter-spacing:0.8px">f()</div>
<svg style="left:41.5px;top:379.5px" width="16" height="15" viewBox="0 0 16 15" ><rect x="0.8" y="0.8" width="10" height="9.6" fill="#e6e7ea" stroke="#6c6d74" stroke-width="1.2"/><path d="M2.6,3.4H9M2.6,5.6H9M2.6,7.8H9" stroke="#8c8d94" stroke-width="0.9"/><path d="M4.6,10.8V13.8H14.6V4.4H11.2" fill="none" stroke="#6c6d74" stroke-width="1.2"/></svg>
<svg style="left:41.5px;top:400px" width="16" height="13" viewBox="0 0 16 13" ><path d="M0.6,1.8H2M0.6,6.4H2M3.4,10.8H4.8" stroke="#000" stroke-width="1.4"/><path d="M3,1.8H11.4" stroke="#008a10" stroke-width="1.8"/><path d="M3,6.4H11.4" stroke="#8a0a8a" stroke-width="1.8"/><path d="M5.8,10.8H15" stroke="#0a0af0" stroke-width="1.8"/></svg>
<svg style="left:22px;top:419.4px" width="16.15" height="15.2" viewBox="0 0 17 16"><path d="M0.6,2.4L6.9,0.4L16.3,3.9V12L10.3,15.2L0.6,6.2Z" fill="#ffe600" stroke="#000" stroke-width="1.1" stroke-linejoin="round"/><path d="M10.3,9.2L16.3,7V12L10.3,15.2Z" fill="#ffc21a"/><path d="M1.4,3.4L9.6,10.4" stroke="#fffbb0" stroke-width="1.3"/><path d="M0.6,2.4L10.3,9.4V15.2M10.3,9.4L16.3,7" fill="none" stroke="#000" stroke-width="0.9"/><path d="M4.6,2.2C3,2.4 2.6,3.6 3.6,4.6L5.4,5.6" fill="none" stroke="#000" stroke-width="0.9"/><path d="M7.5,2.3L11,1.1L15.7,3.6L15.7,8.6L11.4,9.7L7.5,7.2Z" fill="#12b422" stroke="#000" stroke-width="0.9" stroke-linejoin="round"/><path d="M7.5,2.3L11.4,5L15.7,3.6M11.4,5V9.7" fill="none" stroke="#000" stroke-width="0.8"/><path d="M8.2,3.6L10.7,5.4V8.2L8.2,6.6Z" fill="#5cf06c"/><path d="M12.2,5.6L15,4.7V7.6L12.2,8.5Z" fill="#2edc40"/><path d="M8.6,2.5L11,1.8L14.2,3.5L11.5,4.3Z" fill="#3ee050"/></svg>
<svg style="left:40.8px;top:438.6px" width="16.49" height="15.52" viewBox="0 0 17 16"><path d="M0.6,2.4L6.9,0.4L16.3,3.9V12L10.3,15.2L0.6,6.2Z" fill="#ffe600" stroke="#000" stroke-width="1.1" stroke-linejoin="round"/><path d="M10.3,9.2L16.3,7V12L10.3,15.2Z" fill="#ffc21a"/><path d="M1.4,3.4L9.6,10.4" stroke="#fffbb0" stroke-width="1.3"/><path d="M0.6,2.4L10.3,9.4V15.2M10.3,9.4L16.3,7" fill="none" stroke="#000" stroke-width="0.9"/><path d="M4.6,2.2C3,2.4 2.6,3.6 3.6,4.6L5.4,5.6" fill="none" stroke="#000" stroke-width="0.9"/><path d="M6.6,3.2L9.4,2.2L15.8,6.2L15.9,8.4L10.3,10.2L6.6,6.4Z" fill="#f2c200" stroke="#000" stroke-width="0.9" stroke-linejoin="round"/><path d="M9.6,5.6L12.6,4.8L14.6,6.2L11.6,7.2Z" fill="#8a6400"/></svg>
<svg style="left:59.5px;top:479.5px" width="17" height="16" viewBox="0 0 17 16" ><defs><linearGradient id="cp" x1="0" y1="0" x2="1" y2="0.3"><stop offset="0" stop-color="#f8a030"/><stop offset="0.5" stop-color="#e85a08"/><stop offset="1" stop-color="#ffb850"/></linearGradient></defs><path d="M0.8,6.6Q3.6,2.6 7.4,1.4Q10.6,5.4 16,7.4Q12,9.6 9.4,14.6Q6.6,9.4 0.8,6.6Z" fill="url(#cp)" stroke="#000" stroke-width="1" stroke-linejoin="round"/></svg>
<svg style="left:40.5px;top:498.6px" width="16" height="16" viewBox="0 0 16 16" ><circle cx="8" cy="8" r="7" fill="#ffffa0" stroke="#d09800" stroke-width="1.1"/><g fill="#c8a020"><circle cx="8" cy="8" r="0.7"/><circle cx="5" cy="8" r="0.7"/><circle cx="11" cy="8" r="0.7"/><circle cx="8" cy="5" r="0.7"/><circle cx="8" cy="11" r="0.7"/><circle cx="5.6" cy="5.6" r="0.6"/><circle cx="10.4" cy="5.6" r="0.6"/><circle cx="5.6" cy="10.4" r="0.6"/><circle cx="10.4" cy="10.4" r="0.6"/><circle cx="8" cy="2.6" r="0.6"/><circle cx="8" cy="13.4" r="0.6"/><circle cx="2.6" cy="8" r="0.6"/><circle cx="13.4" cy="8" r="0.6"/></g></svg>
<svg style="left:22.5px;top:598.5px" width="16" height="16" viewBox="0 0 16 16" ><path d="M1,3.6H15L13.4,14.6H2.8Z" fill="#fff" stroke="#000" stroke-width="1.2" stroke-linejoin="round"/><path d="M1.2,3.4C4,1.6 12,1.6 14.8,3.4" fill="none" stroke="#000" stroke-width="1"/><path d="M3.6,1L7,13M12.6,0.8L8.4,13" stroke="#ff1010" stroke-width="1"/><path d="M4.6,5.6L8,13.6L11.4,5.6" stroke="#0a20e0" stroke-width="1" fill="none"/><path d="M2.6,8.6L6,5L9.6,12.4L13.4,7" stroke="#10b020" stroke-width="1" fill="none"/><path d="M3,12L13,12.4" stroke="#20c8f0" stroke-width="0.8"/></svg>
<svg style="left:42px;top:621.6px" width="15" height="12" viewBox="0 0 15 12" ><path d="M6.2,1.2L0.8,5.8L6.2,10.4" fill="none" stroke="#000" stroke-width="1.1"/><path d="M9,3.4H14M9,8H14" stroke="#000" stroke-width="1.3"/><ellipse cx="7.2" cy="5.8" rx="1.3" ry="5.2" fill="#10c0e8"/></svg>
<svg style="left:42px;top:641.6px" width="15" height="12" viewBox="0 0 15 12" ><path d="M6.2,1.2L0.8,5.8L6.2,10.4" fill="none" stroke="#9a9ba0" stroke-width="1.1"/><path d="M9,3.4H14M9,8H14" stroke="#9a9ba0" stroke-width="1.3"/><ellipse cx="7.2" cy="5.8" rx="1.3" ry="5.2" fill="#38a8c0"/></svg>
<svg style="left:59.5px;top:659px" width="17" height="17" viewBox="0 0 17 17" ><rect x="6.6" y="0.8" width="9" height="10" fill="#fff" stroke="#000" stroke-width="1"/><path d="M8.4,3.4H10.4M8.4,5.6L10,6.6M12,3L13.6,4" stroke="#1818f0" stroke-width="1.1"/><rect x="0.8" y="4.6" width="9.4" height="11.4" fill="#fff" stroke="#000" stroke-width="1.1"/><path d="M2.6,6.6V13.6H8.4" fill="none" stroke="#1818f0" stroke-width="1"/><path d="M3,13L7.6,8.6" stroke="#ff1010" stroke-width="1"/></svg>
<svg style="left:79px;top:681.4px" width="15" height="11" viewBox="0 0 15 11" ><defs><radialGradient id="tp"><stop offset="0" stop-color="#ffff30"/><stop offset="0.45" stop-color="#ffb020"/><stop offset="0.7" stop-color="#ff20c0"/><stop offset="1" stop-color="#0000ff"/></radialGradient></defs><rect width="15" height="11" fill="#0000ff"/><ellipse cx="7.5" cy="5.5" rx="4.2" ry="4" fill="url(#tp)"/></svg>
<svg style="left:79px;top:699.4px" width="15" height="15" viewBox="0 0 15 15" ><path d="M0.5,3.5V0.5H3.5M11.5,0.5H14.5V3.5M14.5,11.5V14.5H11.5M3.5,14.5H0.5V11.5" fill="none" stroke="#000" stroke-width="1"/><circle cx="7.5" cy="7.5" r="4.8" fill="none" stroke="#0000ff" stroke-width="1" stroke-dasharray="1.6 1"/><path d="M7.5,4.6L10.4,7.5L7.5,10.4L4.6,7.5Z" fill="none" stroke="#0000ff" stroke-width="0.9"/></svg>
<svg style="left:8px;top:10px" width="24" height="22" viewBox="0 0 24 22" ><g fill="none" stroke="#fff" stroke-linecap="round" stroke-linejoin="round">
<path d="M10.5,1.6C14.5,1 17,2.2 15.6,4.6C14.7,6.2 12.6,7.6 11,8.6" stroke-width="1.5"/>
<path d="M11,8.6L8.2,12" stroke-width="1.3"/>
<path d="M4.2,11.5C8.5,10.2 10.8,12 9.6,14.6C8.4,17.2 4.6,20 1.6,20.6C3.2,17.6 5,14.6 6.6,11.6" stroke-width="1.5"/>
<path d="M20.8,9.3C17.5,8.6 14.6,9.6 14.6,11.3C14.6,13.2 19.2,13.4 19,15.6C18.8,17.6 14.6,18 11.6,17" stroke-width="1.7"/>
</g></svg>
<div class="t" style="left:35px;top:13px;font-size:14.6px;color:#fff;font-style:italic;letter-spacing:-0.35px;transform:scaleX(0.86);transform-origin:0 0"><b style="letter-spacing:0.1px">SOLID</b>WORKS</div>
<svg style="left:568px;top:12px" width="14" height="16" viewBox="0 0 14 16" ><defs><radialGradient id="pg" cx="0.4" cy="0.35" r="0.7"><stop offset="0" stop-color="#fff"/><stop offset="0.6" stop-color="#c9cad0"/><stop offset="1" stop-color="#6a6b73"/></radialGradient></defs>
<path d="M1,14.5L5,9.5" stroke="#55565c" stroke-width="1.4"/><ellipse cx="5.2" cy="10.3" rx="3.6" ry="2.2" fill="#8a8b92" transform="rotate(-35 5.2 10.3)"/><circle cx="8" cy="6" r="4.8" fill="url(#pg)"/></svg>
<svg style="left:598px;top:12px" width="15" height="18" viewBox="0 0 15 18" ><defs><linearGradient id="nd" x1="0" y1="0" x2="1" y2="1"><stop offset="0" stop-color="#fff"/><stop offset="1" stop-color="#dfe6f2"/></linearGradient></defs>
<path d="M1,1H9.5L13.5,5V16.5H1Z" fill="url(#nd)" stroke="#8496b4" stroke-width="1"/><path d="M9.5,1V5H13.5" fill="#eef2f8" stroke="#8496b4" stroke-width="0.9"/></svg>
<svg style="left:624.7px;top:18.6px" width="8" height="5" viewBox="0 0 8 5" ><path d="M0,0H7.4L3.7,4.4Z" fill="#3a3a3c"/></svg>
<svg style="left:642px;top:11px" width="19" height="19" viewBox="0 0 19 19" ><defs><linearGradient id="fo" x1="0" y1="0" x2="0" y2="1"><stop offset="0" stop-color="#fde58a"/><stop offset="1" stop-color="#f0b128"/></linearGradient></defs>
<path d="M1,6.5H6L7.5,8H13V16.5H1Z" fill="#e8a820" stroke="#c78a10" stroke-width="0.8"/>
<path d="M3.5,9.5H16L13.2,17H0.8Z" fill="url(#fo)" stroke="#c98e14" stroke-width="0.8"/>
<path d="M9.5,2.8C12.4,2 14.4,3.6 14.3,6" fill="none" stroke="#22b030" stroke-width="1.8"/><path d="M11.8,5.4H16.8L14.3,8.6Z" fill="#22b030"/></svg>
<svg style="left:669.5px;top:18.6px" width="8" height="5" viewBox="0 0 8 5" ><path d="M0,0H7.4L3.7,4.4Z" fill="#3a3a3c"/></svg>
<svg style="left:687.5px;top:12px" width="18" height="18" viewBox="0 0 18 18" ><rect x="0.7" y="0.7" width="16" height="16" rx="1.3" fill="#2046d8" stroke="#0c2590" stroke-width="1"/>
<rect x="3.6" y="0.9" width="10" height="6.2" fill="#e9edf6"/><path d="M4.6,2.6H12.6M4.6,4.4H12.6" stroke="#7d8aa5" stroke-width="0.8"/>
<path d="M8.7,3.2L16.3,16.3H1.1Z" fill="#ffd91a" stroke="#1a1a1a" stroke-width="1" stroke-linejoin="round"/>
<path d="M8.7,7.2V12" stroke="#000" stroke-width="1.9"/><rect x="7.8" y="13.1" width="1.9" height="1.8" fill="#000"/></svg>
<svg style="left:714.9px;top:18.6px" width="8" height="5" viewBox="0 0 8 5" ><path d="M0,0H7.4L3.7,4.4Z" fill="#3a3a3c"/></svg>
<svg style="left:732px;top:12px" width="18" height="18" viewBox="0 0 18 18" ><path d="M4.2,1L10.2,0.8L12.6,7.5L6.8,8.2Z" fill="#a9d1f7" stroke="#6aa4df" stroke-width="0.7"/>
<path d="M1.2,9.2L6,7.2L15.8,9.8L16.2,14L10.6,16.6L1.4,13.6Z" fill="#d9dade" stroke="#6d6e74" stroke-width="0.9"/>
<path d="M1.4,10.4L10.6,13.2L16,10.4M10.6,13.2V16.4" fill="none" stroke="#55565c" stroke-width="0.9"/>
<path d="M3.4,12.2L8.8,13.9" stroke="#222" stroke-width="1.5"/><path d="M6.4,8.6L12.4,10.2" stroke="#fff" stroke-width="1.4"/></svg>
<svg style="left:760px;top:18.8px" width="8" height="5" viewBox="0 0 8 5" ><path d="M0,0H7.4L3.7,4.4Z" fill="#3a3a3c"/></svg>
<svg style="left:777px;top:12px" width="18" height="18" viewBox="0 0 18 18" ><path d="M2,2.2V8.2H8" fill="none" stroke="#aeb0b6" stroke-width="2.2" stroke-linejoin="round"/>
<path d="M2.6,7.6C6,3 11.5,2.4 14,5.6C16.4,8.8 14.2,13.6 9.4,16.4" fill="none" stroke="#aeb0b6" stroke-width="2.6" stroke-linecap="round"/></svg>
<svg style="left:805px;top:18.8px" width="8" height="5" viewBox="0 0 8 5" ><path d="M0,0H7.4L3.7,4.4Z" fill="#9d9ea4"/></svg>
<div class="a" style="left:816px;top:5px;width:45px;height:32px;box-sizing:border-box;border:1px solid #7f8086;border-radius:2px;background:linear-gradient(#d6d8de,#e6e8ec)"></div>
<div class="a" style="left:816px;top:5px;width:32px;height:32px;box-sizing:border-box;border:1px solid #4b4c50;border-radius:2px 0 0 2px;background:#b3b4b8;box-shadow:inset 1px 1px 1px #8f9096"></div>
<svg style="left:825px;top:12px" width="12" height="18" viewBox="0 0 12 18" ><path d="M1.4,1L1.4,13.4L4.4,10.6L6.8,16L9,15L6.6,9.8L10.6,9.6Z" fill="#fff" stroke="#33343a" stroke-width="1" stroke-linejoin="round"/></svg>
<svg style="left:850px;top:18.8px" width="8" height="5" viewBox="0 0 8 5" ><path d="M0,0H7.4L3.7,4.4Z" fill="#2e2e30"/></svg>
<svg style="left:872px;top:12.5px" width="10" height="17" viewBox="0 0 10 17" ><rect x="0.7" y="0.5" width="8.2" height="15.8" rx="3.2" fill="#1e1e1e"/><circle cx="4.8" cy="4.6" r="2.7" fill="#ee1c1c"/><circle cx="4" cy="3.8" r="0.9" fill="#ff9a9a"/><circle cx="4.8" cy="11.6" r="2.7" fill="#23c428"/><circle cx="4" cy="10.8" r="0.9" fill="#a5f5a5"/></svg>
<svg style="left:900px;top:12px" width="18" height="18" viewBox="0 0 18 18" ><path d="M1.2,5.2H13.6V16.6H1.2Z" fill="#f4f5f8" stroke="#787a82" stroke-width="1"/><path d="M3.4,8.4H11.4M3.4,10.8H11.4M3.4,13.2H11.4" stroke="#8d8f98" stroke-width="0.9"/>
<path d="M5.4,5.4L9.6,1.8L12.2,1L16.6,1.6L16.8,3.8L13.4,4.4L11.6,6.6L8.4,7.2Z" fill="#e9b777" stroke="#9a6a2c" stroke-width="0.7" stroke-linejoin="round"/><path d="M6.4,5.6L8.4,7M8,4.2L10,5.8M9.6,3L11.4,4.4" stroke="#8a5a22" stroke-width="0.7"/></svg>
<svg style="left:931.5px;top:13px" width="17" height="16" viewBox="0 0 17 16" ><rect x="0.6" y="0.6" width="15.6" height="14.4" fill="#dce9f8" stroke="#5c82b8" stroke-width="1.1"/>
<rect x="2.8" y="2.8" width="2.6" height="2.6" fill="#fff" stroke="#55699a" stroke-width="0.7"/><rect x="2.8" y="6.6" width="2.6" height="2.6" fill="#fff" stroke="#55699a" stroke-width="0.7"/>
<path d="M7.2,4.1H14M7.2,7.9H14M8.4,11.7H14" stroke="#50618a" stroke-width="1"/><path d="M2.4,11.4L4.2,13.2L7.4,9.8" fill="none" stroke="#1f9d2c" stroke-width="1.7"/></svg>
<svg style="left:958.4px;top:18.8px" width="8" height="5" viewBox="0 0 8 5" ><path d="M0,0H7.4L3.7,4.4Z" fill="#2e2e30"/></svg>
<svg style="left:20px;top:54px" width="16" height="18" viewBox="0 0 16 18" ><rect x="3.3" y="1.4" width="8.2" height="11.4" fill="none" stroke="#00a35a" stroke-width="1.1"/>
<path d="M1.5,9.5L9.5,2.5M1.5,14.5L10.5,6.5" stroke="#000" stroke-width="1" stroke-dasharray="2 1"/>
<circle cx="7" cy="4.8" r="0.9"/><circle cx="6.8" cy="9.6" r="0.9"/>
<path d="M9.4,11.2L14,16.2" stroke="#000" stroke-width="1.3"/><path d="M9,10.6L12.6,11.8L10.2,13.8Z" fill="#000"/></svg>
<svg style="left:60px;top:49.5px" width="16" height="15" viewBox="0 0 16 15" ><path d="M0,13.5H15" stroke="#000" stroke-width="1"/><path d="M1,3.4H3.8V13H1ZM5.5,7H7.6V13H5.5ZM8.4,10H9.8V13H8.4ZM10.6,8.2H12.1V13H10.6Z" fill="#0000ff"/><rect x="8" y="1" width="5" height="4.4" fill="none" stroke="#000" stroke-width="1"/></svg>
<svg style="left:60px;top:78px" width="16" height="15" viewBox="0 0 16 15" ><path d="M0,13.5H15" stroke="#000" stroke-width="1"/><path d="M1,3.4H3.8V13H1ZM5.5,7H7.6V13H5.5ZM8.4,10H9.8V13H8.4ZM10.6,8.2H12.1V13H10.6Z" fill="#0000ff"/><path d="M8.4,3.5H13.2M10.8,1V6M9.2,1.8L12.4,5.2M12.4,1.8L9.2,5.2" stroke="#000" stroke-width="0.6"/><rect x="10.2" y="2.9" width="1.2" height="1.2"/></svg>
<svg style="left:60px;top:107px" width="16" height="15" viewBox="0 0 16 15" ><path d="M0,13.5H15" stroke="#000" stroke-width="1"/><path d="M1,3.4H3.8V13H1ZM5.5,7H7.6V13H5.5ZM8.4,10H9.8V13H8.4ZM10.6,8.2H12.1V13H10.6Z" fill="#0000ff"/><path d="M8,1.2L13.6,7.4" stroke="#000" stroke-width="1" /><path d="M7.4,0.6L11,1.4L8.4,4Z" fill="#000"/></svg>
<svg style="left:160px;top:49.5px" width="16" height="15" viewBox="0 0 16 15" ><path d="M0,13.5H15" stroke="#000" stroke-width="1"/><path d="M1,3.4H3.8V13H1ZM5.5,7H7.6V13H5.5ZM8.4,10H9.8V13H8.4ZM10.6,8.2H12.1V13H10.6Z" fill="#0000ff"/></svg>
<svg style="left:160px;top:81px" width="17" height="10" viewBox="0 0 17 10" ><path d="M0.5,8.5L8.5,1L12.8,5.2M4.6,8.6L11.5,2L16,6.4" fill="none" stroke="#c2184a" stroke-width="1"/></svg>
<svg style="left:287.5px;top:54.7px" width="16" height="16" viewBox="0 0 16 16" ><path d="M0.5,3.5V0.5H3.5M12.5,0.5H15.5V3.5M15.5,12.5V15.5H12.5M3.5,15.5H0.5V12.5" fill="none" stroke="#000" stroke-width="1"/>
<circle cx="8" cy="8" r="5" fill="none" stroke="#0000ff" stroke-width="1" stroke-dasharray="1.6 1"/><path d="M8,5L11,8L8,11L5,8Z" fill="none" stroke="#0000ff" stroke-width="0.9"/></svg>
<svg style="left:333.5px;top:58px" width="16" height="11" viewBox="0 0 16 11" ><path d="M8,9.4L0.8,5.8M8,9.4L4.8,2M8,9.4L11.2,2M8,9.4L15.2,5.8" stroke="#000" stroke-width="0.95" fill="none"/><path d="M0.4,7.6L0.8,5.6L2.8,5.4M3.6,3.6L4.6,1.8L6.2,3M9.8,3L11.4,1.8L12.4,3.6M13.2,5.4L15.2,5.6L15.6,7.6" stroke="#000" stroke-width="0.9" fill="none"/></svg>
<svg style="left:388.5px;top:57px" width="17" height="12" viewBox="0 0 17 12" ><path d="M1,10.4V8C1,3.6 4.2,1 8.5,1C12.8,1 16,3.6 16,8V10.4" fill="none" stroke="#0000ff" stroke-width="1.3"/><path d="M8.5,10.6L2.8,7M8.5,10.6L5.6,3.8M8.5,10.6L11.4,3.8M8.5,10.6L14.2,7" stroke="#000" stroke-width="0.95" fill="none"/><path d="M2.4,8.8L2.8,7L4.6,6.8M12.4,6.8L14.2,7L14.6,8.8" stroke="#000" stroke-width="0.9" fill="none"/></svg>
<svg style="left:437.5px;top:56.5px" width="17" height="13" viewBox="0 0 17 13" ><path d="M3,8.2H13.4L16.6,12.2H7Z" fill="#5a9ae0" stroke="#0000ff" stroke-width="0.9"/><path d="M8.5,9.8L1.4,2.4M8.5,9.8L5,1M8.5,9.8V0.6M8.5,9.8L12,1M8.5,9.8L15.6,2.4" stroke="#000" stroke-width="0.9" fill="none"/></svg>
<div class="a" style="left:476.4px;top:50.8px;width:5.6px;height:5.6px;box-sizing:border-box;border:1px solid #f5c800;background:#fff27a"></div>
<div class="t" style="left:471.5px;top:46.4px;font-size:12.5px;font-weight:bold;color:#0000ff">A</div>
<div class="a" style="left:476.4px;top:79.4px;width:5.6px;height:5.6px;box-sizing:border-box;border:1px solid #f5c800;background:#fff27a"></div>
<div class="t" style="left:471.5px;top:75px;font-size:12.5px;font-weight:bold;color:#0000ff">B</div>
<div class="a" style="left:476.4px;top:108.4px;width:5.6px;height:5.6px;box-sizing:border-box;border:1px solid #f5c800;background:#fff27a"></div>
<div class="t" style="left:471.5px;top:104px;font-size:12.5px;font-weight:bold;color:#0000ff">C</div>
<svg style="left:613px;top:55px" width="17" height="16" viewBox="0 0 17 16" ><path d="M5.4,9.2H16.4L11,14.8H0.6Z" fill="#00d200"/><path d="M8,12.6L2.4,6.6M8,12.6L5.6,5.2M8,12.6L9.4,4.6M8,12.6L13,5.6" stroke="#000" stroke-width="0.95" fill="none"/><path d="M5.6,11.2L8,12.8L9.8,10.8" stroke="#000" stroke-width="1" fill="none"/><path d="M11.6,1.4l1.2,3.2l1.6,-4" stroke="#000" stroke-width="0.8" fill="none"/></svg>
<svg style="left:658.5px;top:55px" width="17" height="16" viewBox="0 0 17 16" ><path d="M8,14.4L1,10.4M8,14.4L4,6.4M8,14.4L10,5.4M8,14.4L15,10.4" stroke="#000" stroke-width="0.95" fill="none"/><path d="M0.6,12.2L1,10.4L3,10.2M3,8.2L4,6.4L5.8,7.4M13,10.2L15,10.4L15.4,12.2" stroke="#000" stroke-width="1" fill="none"/><path d="M11.4,1.4l1.2,3.2l1.6,-4" stroke="#000" stroke-width="0.8" fill="none"/></svg>
<svg style="left:712.5px;top:55px" width="17" height="16" viewBox="0 0 17 16" ><path d="M1,14.6V12C1,7.8 4.2,5.4 8.5,5.4C12.8,5.4 16,7.8 16,12V14.6" fill="none" stroke="#00c800" stroke-width="1.4"/><path d="M8.5,14.8L2.4,10.8M8.5,14.8L5.4,7.8M8.5,14.8L11.2,6.4M8.5,14.8L14.6,10.8" stroke="#000" stroke-width="0.95" fill="none"/><path d="M2,12.6L2.4,10.8L4.2,10.8M13,10.8L14.6,10.8L15,12.6" stroke="#000" stroke-width="1" fill="none"/><path d="M12,1.2l1.2,3.2l1.6,-4" stroke="#000" stroke-width="0.8" fill="none"/></svg>
<svg style="left:757px;top:56.5px" width="18" height="14" viewBox="0 0 18 14" ><path d="M1,9.6H11.6L16.8,13.6H6.6Z" fill="#00d200"/><path d="M8.5,10.6L1.4,2.6M8.5,10.6L5,1.2M8.5,10.6V0.8M8.5,10.6L12,1.2M8.5,10.6L15.6,2.6" stroke="#000" stroke-width="0.95" fill="none"/></svg>
<svg style="left:803px;top:55.5px" width="17" height="16" viewBox="0 0 17 16" ><path d="M1.4,7.4C1.4,3.6 5,2.2 7.6,3.6L12.6,9.8L5.6,14.6L2.4,13Z" fill="#a7a8ad"/><path d="M1.6,9.6L6,8L9,12.2L5.6,14.6L2.4,13Z" fill="#8d8e94"/><path d="M11.6,1l1.2,3.2l1.6,-4" stroke="#9a9ba2" stroke-width="0.8" fill="none"/></svg>
<svg style="left:858.5px;top:55px" width="17" height="16" viewBox="0 0 17 16" ><path d="M8.2,1V14.4M1.2,7.6H15.2M3.6,13.6L12.6,3" stroke="#a3a4aa" stroke-width="1.3" fill="none"/><path d="M8.2,0.2L6.4,3.2H10ZM0.2,7.6L3.2,5.8V9.4ZM16,7.6L13,5.8V9.4ZM8.2,15.4L6.4,12.6H10Z" fill="#a3a4aa"/></svg>
<svg style="left:929.5px;top:55px" width="18" height="16" viewBox="0 0 18 16" ><circle cx="7.4" cy="7.2" r="3.6" fill="#9d9ea4"/><circle cx="4.6" cy="11.4" r="3.6" fill="#b5b6bb"/><circle cx="10.2" cy="11.4" r="3.6" fill="#8b8c92"/><path d="M12.4,1.2l1.2,3.2l1.6,-4" stroke="#9a9ba2" stroke-width="0.8" fill="none"/></svg>
<div class="t" style="left:983.6999999999999px;top:45.8px;font-size:12.5px;font-weight:bold;color:#00a048;letter-spacing:-1px">A</div>
<div class="a" style="left:988.9px;top:57.6px;width:5.6px;height:6px;box-sizing:border-box;border:1px solid #3f86f0;background:#f2f59a"></div>
<div class="t" style="left:983.6999999999999px;top:74.60000000000001px;font-size:12.5px;font-weight:bold;color:#00a048;letter-spacing:-1px">B</div>
<div class="a" style="left:988.9px;top:86.4px;width:5.6px;height:6px;box-sizing:border-box;border:1px solid #3f86f0;background:#f2f59a"></div>
<div class="t" style="left:983.6999999999999px;top:103.60000000000001px;font-size:12.5px;font-weight:bold;color:#00a048;letter-spacing:-1px">C</div>
<div class="a" style="left:988.9px;top:115.4px;width:5.6px;height:6px;box-sizing:border-box;border:1px solid #3f86f0;background:#f2f59a"></div>
<div class="a" style="left:1115px;top:51px;width:13px;height:12px;box-sizing:border-box;border:1px solid #ff5a5a;background:#ffff80"></div><div class="a" style="left:1118.6px;top:54.4px;width:5.8px;height:5.2px;background:#ff5f5f"></div>
<svg style="left:1113.5px;top:78.5px" width="14" height="14" viewBox="0 0 14 14" ><circle cx="7" cy="7" r="6" fill="#ffff6a" stroke="#ff5a5a" stroke-width="1.1"/><circle cx="7" cy="7" r="3" fill="#ff5f5f"/></svg>
<svg style="left:1231px;top:54px" width="18" height="18" viewBox="0 0 18 18" ><path d="M2.2,2.2C4.6,0.2 7.6,1.4 9,4.4C10.2,7.4 12.6,9.4 15.6,11.4C17.2,13 16.4,15.8 14,16.2L7.4,16.4C3.4,15 1,11.4 1.2,6.8C1.2,4.8 1.4,3.2 2.2,2.2Z" fill="#f29a5e" stroke="#000" stroke-width="1.4"/><path d="M6.4,8.6C7,11.6 9.6,13.4 13,13.4" fill="none" stroke="#e01010" stroke-width="1.6"/><circle cx="4.8" cy="5.6" r="1.5" fill="#e01010" stroke="#000" stroke-width="0.5"/><path d="M12.4,2.2C15,1.4 16.6,3.2 15.8,7" fill="none" stroke="#000" stroke-width="1.3"/><path d="M13.4,3.2C14.6,3.2 15.2,4.4 14.8,6" fill="none" stroke="#f0c020" stroke-width="1"/></svg>
<svg style="left:1277px;top:57.8px" width="15" height="10" viewBox="0 0 15 10" ><defs><radialGradient id="pl127757"><stop offset="0" stop-color="#ffff30"/><stop offset="0.45" stop-color="#ffb020"/><stop offset="0.7" stop-color="#ff20c0"/><stop offset="1" stop-color="#0000ff"/></radialGradient></defs><rect width="15" height="10" fill="#0000ff"/><ellipse cx="7.5" cy="5.0" rx="4.2" ry="3.8" fill="url(#pl127757)"/></svg>
<svg style="left:1316px;top:55px" width="15" height="16" viewBox="0 0 15 16" ><path d="M1.4,8.6C1.4,4 4.4,1 8,1C11.6,1 13.6,4 13.8,8.4L8.6,14.6L3.4,13.6Z" fill="#e4e6ec" stroke="#0000ff" stroke-width="1.4"/><path d="M4.2,12.6L8.8,2.6M6.6,13.6L11.4,4M2.6,8.6L12.6,6.2M3.4,5.4L11.8,9.6M8.8,14L13,7" stroke="#000" stroke-width="1"/><path d="M1.6,9.4L4,13.6L8.6,14.4" stroke="#0000ff" stroke-width="1.4" fill="none"/></svg>
<svg style="left:1359.5px;top:55px" width="17" height="16" viewBox="0 0 17 16" ><path d="M1,1V14.4H15.6" fill="none" stroke="#000" stroke-width="1.1"/><path d="M2.4,13.4L3.8,10.6L5,13L6.4,9.4L7.6,13.2V1.2H9.4V13.2L10.6,9.4L12,13L13.2,10.6L14.6,13.4" fill="none" stroke="#ff0000" stroke-width="1"/><rect x="7.6" y="1.2" width="1.8" height="12.2" fill="#ff0000"/></svg>
<svg style="left:1411.5px;top:54.5px" width="16" height="16" viewBox="0 0 16 16" ><circle cx="8" cy="8" r="7.2" fill="#e3e5ea" stroke="#9b9ca2" stroke-width="1"/><path d="M3.4,3.4L7.6,8.4M12.4,3L7.6,8.4V14.6M8.4,8.2H15" stroke="#a5a6ac" stroke-width="1.1" fill="none"/></svg>
<div class="a" style="left:0;top:173px;width:140px;height:1px;background:#1c1c1e"></div>
<div class="a" style="left:0px;top:174px;width:28px;height:20px;box-sizing:border-box;background:#a9aaae;border-left:1px solid #1c1c1e;border-top:1px solid #c9cace"></div><div class="a" style="left:1px;top:174px;width:1px;height:20px;background:#d0d1d5"></div>
<div class="a" style="left:28px;top:174px;width:28px;height:20px;box-sizing:border-box;background:#a9aaae;border-left:1px solid #1c1c1e;border-top:1px solid #c9cace"></div><div class="a" style="left:29px;top:174px;width:1px;height:20px;background:#d0d1d5"></div>
<div class="a" style="left:56px;top:174px;width:28px;height:20px;box-sizing:border-box;background:#a9aaae;border-left:1px solid #1c1c1e;border-top:1px solid #c9cace"></div><div class="a" style="left:57px;top:174px;width:1px;height:20px;background:#d0d1d5"></div>
<div class="a" style="left:84px;top:174px;width:28px;height:20px;box-sizing:border-box;background:#a9aaae;border-left:1px solid #1c1c1e;border-top:1px solid #c9cace"></div><div class="a" style="left:85px;top:174px;width:1px;height:20px;background:#d0d1d5"></div>
<div class="a" style="left:112px;top:174px;width:28px;height:21px;box-sizing:border-box;background:#eceef3;border-left:1px solid #1c1c1e;border-right:1px solid #1c1c1e"></div>
<svg style="left:5.6px;top:176.4px" width="17.0" height="16.0" viewBox="0 0 17 16"><path d="M0.6,2.4L6.9,0.4L16.3,3.9V12L10.3,15.2L0.6,6.2Z" fill="#ffe600" stroke="#000" stroke-width="1.1" stroke-linejoin="round"/><path d="M10.3,9.2L16.3,7V12L10.3,15.2Z" fill="#ffc21a"/><path d="M1.4,3.4L9.6,10.4" stroke="#fffbb0" stroke-width="1.3"/><path d="M0.6,2.4L10.3,9.4V15.2M10.3,9.4L16.3,7" fill="none" stroke="#000" stroke-width="0.9"/><path d="M4.6,2.2C3,2.4 2.6,3.6 3.6,4.6L5.4,5.6" fill="none" stroke="#000" stroke-width="0.9"/><path d="M7.5,2.3L11,1.1L15.7,3.6L15.7,8.6L11.4,9.7L7.5,7.2Z" fill="#12b422" stroke="#000" stroke-width="0.9" stroke-linejoin="round"/><path d="M7.5,2.3L11.4,5L15.7,3.6M11.4,5V9.7" fill="none" stroke="#000" stroke-width="0.8"/><path d="M8.2,3.6L10.7,5.4V8.2L8.2,6.6Z" fill="#5cf06c"/><path d="M12.2,5.6L15,4.7V7.6L12.2,8.5Z" fill="#2edc40"/><path d="M8.6,2.5L11,1.8L14.2,3.5L11.5,4.3Z" fill="#3ee050"/></svg>
<svg style="left:33.5px;top:176px" width="18" height="18" viewBox="0 0 18 18" ><rect x="1" y="5" width="12.6" height="11.4" fill="#f0f2f7" stroke="#4a5a8a" stroke-width="1.1"/><rect x="1.6" y="5.4" width="11.4" height="2" fill="#7d8dbd"/><rect x="3" y="9" width="2.4" height="2.4" fill="#f0a020"/><rect x="6.6" y="9" width="5.4" height="2.2" fill="#a9d3f2"/><rect x="3" y="12.6" width="2.4" height="2.4" fill="#fff" stroke="#777" stroke-width="0.6"/><path d="M6.8,13.8H12" stroke="#888" stroke-width="1"/><path d="M5,6L9.4,1.8L12,0.8L16.6,1.6L16.8,3.6L13.4,4.4L11.6,6.8L8.2,7.6Z" fill="#ecba7a" stroke="#96682c" stroke-width="0.7" stroke-linejoin="round"/><path d="M6,6L8,7.4M7.6,4.4L9.8,6.2M9.2,3L11.2,4.6" stroke="#8a5a22" stroke-width="0.7"/></svg>
<svg style="left:61.5px;top:174.5px" width="18" height="19" viewBox="0 0 18 19" ><path d="M2.2,0.5V18M4.6,3V15.6M4.6,5.6H8.6M4.6,14.4H11" stroke="#5e5f66" stroke-width="1.1" fill="none"/><rect x="7.4" y="2.6" width="5.6" height="5.6" rx="1" fill="#ffd800" stroke="#000" stroke-width="1.2"/><rect x="10.6" y="10.6" width="5.6" height="5.6" rx="1" fill="#ffd800" stroke="#000" stroke-width="1.2"/><rect x="8.6" y="3.6" width="2" height="1.6" fill="#fff6a0"/><rect x="11.8" y="11.6" width="2" height="1.6" fill="#fff6a0"/></svg>
<svg style="left:89.8px;top:176px" width="16.0" height="16.0" viewBox="0 0 16 16"><defs><clipPath id="bc89"><circle cx="8" cy="8" r="7.6"/></clipPath><radialGradient id="bs89" cx="0.35" cy="0.3" r="0.8"><stop offset="0" stop-color="#fff" stop-opacity="0.55"/><stop offset="0.5" stop-color="#fff" stop-opacity="0"/><stop offset="1" stop-color="#000" stop-opacity="0.3"/></radialGradient></defs><g clip-path="url(#bc89)"><rect width="16" height="16" fill="#e02a20"/><path d="M-1,-1H7.2L5.4,8.6L-1,10Z" fill="#2b62e0"/><path d="M-1,9.6L5.4,8.4L7.4,17H-1Z" fill="#2cae3a"/><path d="M5.4,8.4C9,10.6 13,10 17,8.4V17H7.2Z" fill="#f4d21c"/></g><ellipse cx="11.8" cy="5" rx="2.2" ry="3.2" fill="#1a1030" transform="rotate(-25 11.8 5)"/><circle cx="8" cy="8" r="7.6" fill="url(#bs89)"/></svg>
<svg style="left:118px;top:175.5px" width="17" height="19" viewBox="0 0 17 19" ><path d="M1,9.6L16.4,4.4" stroke="#000" stroke-width="1.2"/><ellipse cx="8" cy="9.4" rx="2.4" ry="8.6" fill="#2f86ff" stroke="#1560e0" stroke-width="0.8"/><ellipse cx="7.6" cy="8" rx="0.9" ry="5.6" fill="#7fc0ff"/><path d="M5.6,8L10.4,6.4" stroke="#8a7a60" stroke-width="0.8"/></svg>
<svg style="left:1008.5px;top:149.5px" width="17" height="17" viewBox="0 0 17 17" ><path d="M10.6,10.6L15.4,15.4" stroke="#3f66c8" stroke-width="2.6" stroke-linecap="round"/><path d="M10.6,10.6L15.2,15.2" stroke="#9cc0f4" stroke-width="1"/><circle cx="6.6" cy="6.6" r="5.6" fill="#eef2f8" stroke="#6f7890" stroke-width="1.3"/><circle cx="6.6" cy="6.6" r="2.2" fill="none" stroke="#6a6e7c" stroke-width="1"/><path d="M6.6,2.4V4M6.6,9.2V10.8M2.4,6.6H4M9.2,6.6H10.8" stroke="#6a6e7c" stroke-width="1.2"/></svg>
<svg style="left:1031.5px;top:149.5px" width="17" height="17" viewBox="0 0 17 17" ><path d="M10.6,10.6L15.4,15.4" stroke="#3f66c8" stroke-width="2.6" stroke-linecap="round"/><path d="M10.6,10.6L15.2,15.2" stroke="#9cc0f4" stroke-width="1"/><circle cx="6.6" cy="6.6" r="5.6" fill="#eef2f8" stroke="#6f7890" stroke-width="1.3"/><rect x="0.6" y="0.6" width="11" height="9" fill="none" stroke="#5a5e6c" stroke-width="0.9" stroke-dasharray="1.6 1.2"/><path d="M6.6,3.4V7.2M6.6,8.6V9.8" stroke="#5a5e6c" stroke-width="1.2"/></svg>
<svg style="left:1054.5px;top:149.5px" width="18" height="17" viewBox="0 0 18 17" ><path d="M1.4,2.2L4.2,0.8L13.2,9.6C15.2,11.4 15.4,14.2 13.6,15.4C11.8,16.4 9.6,15.4 8.6,13.4Z" fill="#a9d2f6" stroke="#2d6fc4" stroke-width="1.1" stroke-linejoin="round"/><path d="M3.4,3L11.6,11.4" stroke="#fff" stroke-width="1.3"/><path d="M10.4,4.2H16.8" stroke="#2b62d8" stroke-width="1.6"/><path d="M9.2,4.2L12.2,1.6V6.8Z" fill="#2b62d8"/></svg>
<svg style="left:1078.5px;top:149.5px" width="16" height="17" viewBox="0 0 16 17" ><path d="M1,3.2C1,1.6 4,0.8 8,0.8C12,0.8 15,1.6 15,3.2V14C15,15.4 12,16.2 8,16.2C4,16.2 1,15.4 1,14Z" fill="#7aa7dc" stroke="#34588a" stroke-width="0.9"/><path d="M5.6,4.2C5.6,3.4 6.6,3 8,3C9.4,3 10.4,3.4 10.4,4.2V15.8H5.6Z" fill="#3d66a8"/><rect x="1.6" y="3.4" width="3.6" height="12" fill="#f2c81e"/><rect x="10.8" y="3.4" width="3.6" height="12" fill="#f2c81e"/><path d="M1.8,5L5,7M1.8,8L5,10M1.8,11L5,13M11,5L14.2,7M11,8L14.2,10M11,11L14.2,13" stroke="#8a6a10" stroke-width="0.8"/></svg>
<svg style="left:1100.5px;top:149.5px" width="18" height="17" viewBox="0 0 18 17" ><path d="M1,5.6L5.6,1H16.6V11.2L12,16H1Z" fill="#f4f6fa" stroke="#6a6c78" stroke-width="1"/><path d="M1,5.6H12V16" fill="#8fb8ec" stroke="#3f6ab0" stroke-width="1"/><rect x="1.4" y="6" width="10.2" height="9.6" fill="#86b2ea"/><path d="M12,5.6L16.6,1" stroke="#6a6c78" stroke-width="1"/><path d="M9.8,3.2H12.6M11.2,1.8V4.6M13.4,9H16.2M14.8,7.6L13.4,9L14.8,10.4" stroke="#e01818" stroke-width="1.1" fill="none"/></svg>
<svg style="left:1125.1px;top:157.4px" width="8" height="5" viewBox="0 0 8 5" ><path d="M0,0H5.4L2.7,3Z" fill="#7d7e85"/></svg>
<svg style="left:1137.5px;top:149.5px" width="18" height="17" viewBox="0 0 18 17" ><path d="M1,5.2L5.4,1H16.8V11.4L12.4,16H1Z" fill="#fff" stroke="#5e6070" stroke-width="1.1" stroke-linejoin="round"/><path d="M12.4,5.2L16.8,1V11.4L12.4,16Z" fill="#6f9fe0"/><path d="M7.4,5.2H12.4V16H7.4Z" fill="#b5d0f4"/><path d="M1,5.2H12.4V16M12.4,5.2L16.8,1" fill="none" stroke="#5e6070" stroke-width="1.1"/></svg>
<svg style="left:1161.8px;top:157.4px" width="8" height="5" viewBox="0 0 8 5" ><path d="M0,0H5.4L2.7,3Z" fill="#7d7e85"/></svg>
<svg style="left:1174px;top:151px" width="18" height="15" viewBox="0 0 18 15" ><circle cx="4.6" cy="8.8" r="3.4" fill="#dbe6f6" stroke="#6d7488" stroke-width="1.2"/><circle cx="12" cy="10.4" r="3" fill="#dbe6f6" stroke="#6d7488" stroke-width="1.2"/><path d="M8,8.6C9,7.4 9.6,7.6 9.6,8.8M1.6,6.8C2,3 4,1 6.4,1.6M14.6,8.6C15.6,6 16.6,5.8 17.2,6.6" fill="none" stroke="#6d7488" stroke-width="1.1"/></svg>
<svg style="left:1198.1999999999998px;top:157.4px" width="8" height="5" viewBox="0 0 8 5" ><path d="M0,0H5.4L2.7,3Z" fill="#7d7e85"/></svg>
<svg style="left:1211.6px;top:150px" width="16.48" height="16.48" viewBox="0 0 16 16"><defs><clipPath id="bc1211"><circle cx="8" cy="8" r="7.6"/></clipPath><radialGradient id="bs1211" cx="0.35" cy="0.3" r="0.8"><stop offset="0" stop-color="#fff" stop-opacity="0.55"/><stop offset="0.5" stop-color="#fff" stop-opacity="0"/><stop offset="1" stop-color="#000" stop-opacity="0.3"/></radialGradient></defs><g clip-path="url(#bc1211)"><rect width="16" height="16" fill="#e02a20"/><path d="M-1,-1H7.2L5.4,8.6L-1,10Z" fill="#2b62e0"/><path d="M-1,9.6L5.4,8.4L7.4,17H-1Z" fill="#2cae3a"/><path d="M5.4,8.4C9,10.6 13,10 17,8.4V17H7.2Z" fill="#f4d21c"/></g><circle cx="8" cy="8" r="7.6" fill="url(#bs1211)"/></svg>
<svg style="left:1234px;top:149.5px" width="18" height="18" viewBox="0 0 18 18" ><path d="M0.6,11.6L3.6,14.6L6.6,11.6L9.6,14.6L12.6,11.6L15.6,14.6L17.4,12.6M0.6,15.6L3.6,12.6L6.6,15.6L9.6,12.6L12.6,15.6L15.6,12.6L17.4,14.6" stroke="#333" stroke-width="1" fill="none"/></svg>
<svg style="left:1236.4px;top:149.8px" width="13.12" height="13.12" viewBox="0 0 16 16"><defs><clipPath id="bc1236"><circle cx="8" cy="8" r="7.6"/></clipPath><radialGradient id="bs1236" cx="0.35" cy="0.3" r="0.8"><stop offset="0" stop-color="#fff" stop-opacity="0.55"/><stop offset="0.5" stop-color="#fff" stop-opacity="0"/><stop offset="1" stop-color="#000" stop-opacity="0.3"/></radialGradient></defs><g clip-path="url(#bc1236)"><rect width="16" height="16" fill="#e02a20"/><path d="M-1,-1H7.2L5.4,8.6L-1,10Z" fill="#2b62e0"/><path d="M-1,9.6L5.4,8.4L7.4,17H-1Z" fill="#2cae3a"/><path d="M5.4,8.4C9,10.6 13,10 17,8.4V17H7.2Z" fill="#f4d21c"/></g><circle cx="8" cy="8" r="7.6" fill="url(#bs1236)"/></svg>
<svg style="left:1259.0px;top:157.4px" width="8" height="5" viewBox="0 0 8 5" ><path d="M0,0H5.4L2.7,3Z" fill="#7d7e85"/></svg>
<svg style="left:1271.5px;top:149.5px" width="18" height="18" viewBox="0 0 18 18" ><rect x="1" y="3" width="13.4" height="10" fill="#eef0f4" stroke="#5a5c68" stroke-width="1.2"/><rect x="2.6" y="4.6" width="10.2" height="6.8" fill="#9aa3b4"/><path d="M3,10.6L6.4,7L8.6,9L12.4,5.4" stroke="#e8eef8" stroke-width="1.1" fill="none"/><path d="M5.4,14V15.6H10.4V14M3.2,16.2H12.6" stroke="#5a5c68" stroke-width="1.1" fill="none"/><path d="M7.4,4.4L10.8,1.4L13,0.6L17,1.2L17.2,3L14.2,3.6L12.6,5.6L9.8,6.2Z" fill="#ecba7a" stroke="#96682c" stroke-width="0.7" stroke-linejoin="round"/></svg>
<svg style="left:1295.8px;top:157.4px" width="8" height="5" viewBox="0 0 8 5" ><path d="M0,0H5.4L2.7,3Z" fill="#7d7e85"/></svg>
<div class="t" style="left:147.7px;top:8.5px;font-size:14px;color:#1a1a1a;letter-spacing:-0.28px">文件(F)</div>
<div class="t" style="left:207.0px;top:8.5px;font-size:14px;color:#1a1a1a;letter-spacing:-0.53px">编辑(E)</div>
<div class="t" style="left:266.0px;top:8.5px;font-size:14px;color:#1a1a1a;letter-spacing:-0.17px">视图(V)</div>
<div class="t" style="left:327.0px;top:8.5px;font-size:14px;color:#1a1a1a;letter-spacing:0.12px">插入(I)</div>
<div class="t" style="left:383.7px;top:8.5px;font-size:14px;color:#1a1a1a;letter-spacing:-0.53px">工具(T)</div>
<div class="t" style="left:442.3px;top:8.5px;font-size:14px;color:#1a1a1a;letter-spacing:-0.12px">窗口(W)</div>
<div class="t" style="left:507.2px;top:8.5px;font-size:14px;color:#1a1a1a;letter-spacing:-0.05px">帮助(H)</div>
<div class="t" style="left:1237.0px;top:9.0px;font-size:14px;color:#2a2a2a;letter-spacing:0.05px">Simple Doublet *</div>
<div class="t" style="left:6.7px;top:69.5px;font-size:14px;color:#1a1a1a;letter-spacing:0.75px">选择光</div>
<div class="t" style="left:21.5px;top:88.3px;font-size:14px;color:#1a1a1a;letter-spacing:1.00px">线</div>
<div class="t" style="left:92.0px;top:46.3px;font-size:14px;color:#1a1a1a">摘要统计</div>
<div class="t" style="left:91.0px;top:75.0px;font-size:14px;color:#1a1a1a;letter-spacing:0.33px">位置统计</div>
<div class="t" style="left:91.0px;top:104.0px;font-size:14px;color:#1a1a1a;letter-spacing:0.33px">方向统计</div>
<div class="t" style="left:192.0px;top:46.3px;font-size:14px;color:#1a1a1a;letter-spacing:-0.26px">All Statistics</div>
<div class="t" style="left:191.0px;top:75.0px;font-size:14px;color:#1a1a1a;letter-spacing:0.33px">路径数据</div>
<div class="t" style="left:281.3px;top:69.0px;font-size:14px;color:#1a1a1a;letter-spacing:1.70px">照度</div>
<div class="t" style="left:319.0px;top:69.0px;font-size:14px;color:#1a1a1a;letter-spacing:0.23px">强度:方</div>
<div class="t" style="left:320.3px;top:88.0px;font-size:14px;color:#1a1a1a;letter-spacing:1.00px">向余弦</div>
<div class="t" style="left:327.3px;top:106.8px;font-size:14px;color:#1a1a1a;letter-spacing:2.00px">空间</div>
<div class="t" style="left:374.0px;top:69.0px;font-size:14px;color:#1a1a1a;letter-spacing:0.43px">强度:角</div>
<div class="t" style="left:375.0px;top:88.0px;font-size:14px;color:#1a1a1a;letter-spacing:1.00px">度空间</div>
<div class="t" style="left:429.0px;top:69.0px;font-size:14px;color:#1a1a1a;letter-spacing:0.50px">辉度(</div>
<div class="t" style="left:429.5px;top:88.0px;font-size:14px;color:#1a1a1a">面积)</div>
<div class="t" style="left:501.5px;top:46.3px;font-size:14px;color:#1a1a1a;letter-spacing:-0.02px">Type A 辐射图</div>
<div class="t" style="left:501.5px;top:75.0px;font-size:14px;color:#1a1a1a;letter-spacing:-0.13px">Type B 辐射图</div>
<div class="t" style="left:501.5px;top:104.0px;font-size:14px;color:#1a1a1a;letter-spacing:-0.24px">Type C 辐射图</div>
<div class="t" style="left:606.2px;top:69.0px;font-size:14px;color:#1a1a1a;letter-spacing:1.60px">照度</div>
<div class="t" style="left:645.0px;top:69.0px;font-size:14px;color:#1a1a1a;letter-spacing:1.00px">光强度</div>
<div class="t" style="left:650.0px;top:88.5px;font-size:14px;color:#1a1a1a;letter-spacing:0.50px">(方向</div>
<div class="t" style="left:648.0px;top:107.3px;font-size:14px;color:#1a1a1a;letter-spacing:-0.12px">余弦...</div>
<div class="t" style="left:699.0px;top:69.0px;font-size:14px;color:#1a1a1a;letter-spacing:1.00px">光强度</div>
<div class="t" style="left:704.0px;top:88.5px;font-size:14px;color:#1a1a1a;letter-spacing:0.50px">(角度</div>
<div class="t" style="left:704.0px;top:107.3px;font-size:14px;color:#1a1a1a;letter-spacing:0.50px">空间)</div>
<div class="t" style="left:750.8px;top:69.0px;font-size:14px;color:#1a1a1a;letter-spacing:2.50px">辉度</div>
<div class="t" style="left:789.0px;top:69.0px;font-size:14px;color:#8b8d96;letter-spacing:1.00px">色度分</div>
<div class="t" style="left:803.5px;top:88.5px;font-size:14px;color:#8b8d96;letter-spacing:1.00px">析</div>
<div class="t" style="left:841.6px;top:69.0px;font-size:14px;color:#8b8d96;letter-spacing:0.23px">Uniform</div>
<div class="t" style="left:849.0px;top:88.5px;font-size:14px;color:#8b8d96;letter-spacing:0.33px">Color</div>
<div class="t" style="left:848.4px;top:107.3px;font-size:14px;color:#8b8d96;letter-spacing:-0.80px">Space</div>
<div class="t" style="left:920.8px;top:69.0px;font-size:14px;color:#8b8d96;letter-spacing:-0.42px">Visual</div>
<div class="t" style="left:902.3px;top:88.5px;font-size:14px;color:#8b8d96;letter-spacing:-0.40px">Appearance</div>
<div class="t" style="left:1013.0px;top:46.3px;font-size:14px;color:#1a1a1a;letter-spacing:0.03px">Type A 亮度图</div>
<div class="t" style="left:1013.0px;top:75.0px;font-size:14px;color:#1a1a1a;letter-spacing:-0.08px">Type B 亮度图</div>
<div class="t" style="left:1013.0px;top:104.0px;font-size:14px;color:#1a1a1a;letter-spacing:-0.19px">Type C 亮度图</div>
<div class="t" style="left:1143.5px;top:46.3px;font-size:14px;color:#1a1a1a;letter-spacing:0.83px">等高照度</div>
<div class="t" style="left:1143.5px;top:75.0px;font-size:14px;color:#1a1a1a;letter-spacing:0.50px">配光曲线</div>
<div class="t" style="left:1217.7px;top:69.0px;font-size:14px;color:#1a1a1a;letter-spacing:0.65px">等高线</div>
<div class="t" style="left:1233.0px;top:88.0px;font-size:14px;color:#1a1a1a;letter-spacing:2.00px">图</div>
<div class="t" style="left:1269.5px;top:69.0px;font-size:14px;color:#1a1a1a;letter-spacing:2.00px">绘图</div>
<div class="t" style="left:1308.3px;top:69.0px;font-size:14px;color:#1a1a1a;letter-spacing:1.70px">网格</div>
<div class="t" style="left:1346.0px;top:69.0px;font-size:14px;color:#1a1a1a;letter-spacing:1.00px">分布剖</div>
<div class="t" style="left:1353.0px;top:88.0px;font-size:14px;color:#1a1a1a;letter-spacing:2.00px">面图</div>
<div class="t" style="left:1398.0px;top:69.0px;font-size:14px;color:#8b8d96;letter-spacing:1.00px">方向图</div>
<div class="t" style="left:6.7px;top:141.8px;font-size:16px;color:#1a1a1a;letter-spacing:1.05px">装配体</div>
<div class="t" style="left:75.0px;top:141.8px;font-size:16px;color:#1a1a1a;letter-spacing:2.50px">布局</div>
<div class="t" style="left:131.0px;top:141.8px;font-size:16px;color:#1a1a1a;letter-spacing:2.50px">草图</div>
<div class="t" style="left:187.0px;top:141.8px;font-size:16px;color:#1a1a1a;letter-spacing:2.50px">评估</div>
<div class="t" style="left:243.0px;top:141.8px;font-size:16px;color:#1a1a1a;letter-spacing:2.50px">分析</div>
<div class="t" style="left:295.0px;top:141.8px;font-size:16px;color:#1a1a1a;letter-spacing:1.00px">项目设定</div>
<div class="t" style="left:375.0px;top:141.8px;font-size:16px;color:#1a1a1a;letter-spacing:0.67px">光学几何</div>
<div class="t" style="left:455.5px;top:141.8px;font-size:16px;color:#1a1a1a;letter-spacing:-0.50px">Sources</div>
<div class="t" style="left:528.5px;top:141.8px;font-size:16px;color:#1a1a1a;letter-spacing:-0.88px">Trace</div>
<div class="t" style="left:583.0px;top:141.8px;font-size:16px;color:#1a1a1a;letter-spacing:-0.37px">Analyze</div>
<div class="t" style="left:656.7px;top:141.8px;font-size:16px;color:#1a1a1a;letter-spacing:0.30px">设计</div>
<div class="t" style="left:23.7px;top:195.6px;font-size:15px;color:#000;letter-spacing:-0.04px">Assembly Simple Doublet Optics</div>
<div class="t" style="left:40.7px;top:215.5px;font-size:15px;color:#000;letter-spacing:0.57px">光学数据库</div>
<div class="t" style="left:60.0px;top:235.5px;font-size:15px;color:#000;letter-spacing:1.00px">透镜</div>
<div class="t" style="left:60.0px;top:255.5px;font-size:15px;color:#000;letter-spacing:0.53px">光学实体...</div>
<div class="t" style="left:60.8px;top:275.6px;font-size:15px;color:#000;letter-spacing:0.23px">Media</div>
<div class="t" style="left:60.6px;top:295.6px;font-size:15px;color:#000;letter-spacing:-0.11px">Coatings</div>
<div class="t" style="left:60.6px;top:315.6px;font-size:15px;color:#000;letter-spacing:-0.05px">Scatter Models</div>
<div class="t" style="left:60.0px;top:335.5px;font-size:15px;color:#000;letter-spacing:2.00px">光源</div>
<div class="t" style="left:60.0px;top:355.5px;font-size:15px;color:#000;letter-spacing:2.00px">函数</div>
<div class="t" style="left:60.0px;top:375.5px;font-size:15px;color:#000;letter-spacing:0.67px">用户数据</div>
<div class="t" style="left:61.6px;top:395.6px;font-size:15px;color:#000;letter-spacing:-0.19px">Analysis Templates</div>
<div class="t" style="left:41.2px;top:415.6px;font-size:15px;color:#000;letter-spacing:0.18px">Simple Doublet (Default)</div>
<div class="t" style="left:60.2px;top:435.6px;font-size:15px;color:#000;letter-spacing:0.42px">Detector-1</div>
<div class="t" style="left:79.4px;top:455.6px;font-size:15px;color:#000;letter-spacing:0.04px">Coating: Perfectly Absorbing</div>
<div class="t" style="left:79.4px;top:475.6px;font-size:15px;color:#000;letter-spacing:-0.01px">Circular plate</div>
<div class="t" style="left:60.3px;top:495.6px;font-size:15px;color:#000;letter-spacing:-0.17px">GridSourcePolar1-1</div>
<div class="t" style="left:60.3px;top:515.6px;font-size:15px;color:#000;letter-spacing:-0.22px">Doublet_Bconc_476371-1</div>
<div class="t" style="left:79.4px;top:535.6px;font-size:15px;color:#000">Coating: Perfectly Transmitting</div>
<div class="t" style="left:60.3px;top:555.6px;font-size:15px;color:#000;letter-spacing:-0.26px">Doublet_BConv_476371-1</div>
<div class="t" style="left:79.4px;top:575.6px;font-size:15px;color:#000">Coating: Perfectly Transmitting</div>
<div class="t" style="left:40.8px;top:595.5px;font-size:15px;color:#000;letter-spacing:2.20px">结果</div>
<div class="t" style="left:59.4px;top:615.6px;font-size:15px;color:#000;letter-spacing:0.04px">InitialTrace_NoDetector</div>
<div class="t" style="left:60.4px;top:635.6px;font-size:15px;color:#000;letter-spacing:0.20px">WithDetector</div>
<div class="t" style="left:80.3px;top:655.6px;font-size:15px;color:#fff;letter-spacing:-0.46px">ResultSet_Irradiance_1</div>
<div class="t" style="left:97.5px;top:675.6px;font-size:15px;color:#000;letter-spacing:0.09px">Irradiance 1</div>
<div class="t" style="left:98.4px;top:695.6px;font-size:15px;color:#000;letter-spacing:-0.13px">Spots Position 1</div>
</body></html>
